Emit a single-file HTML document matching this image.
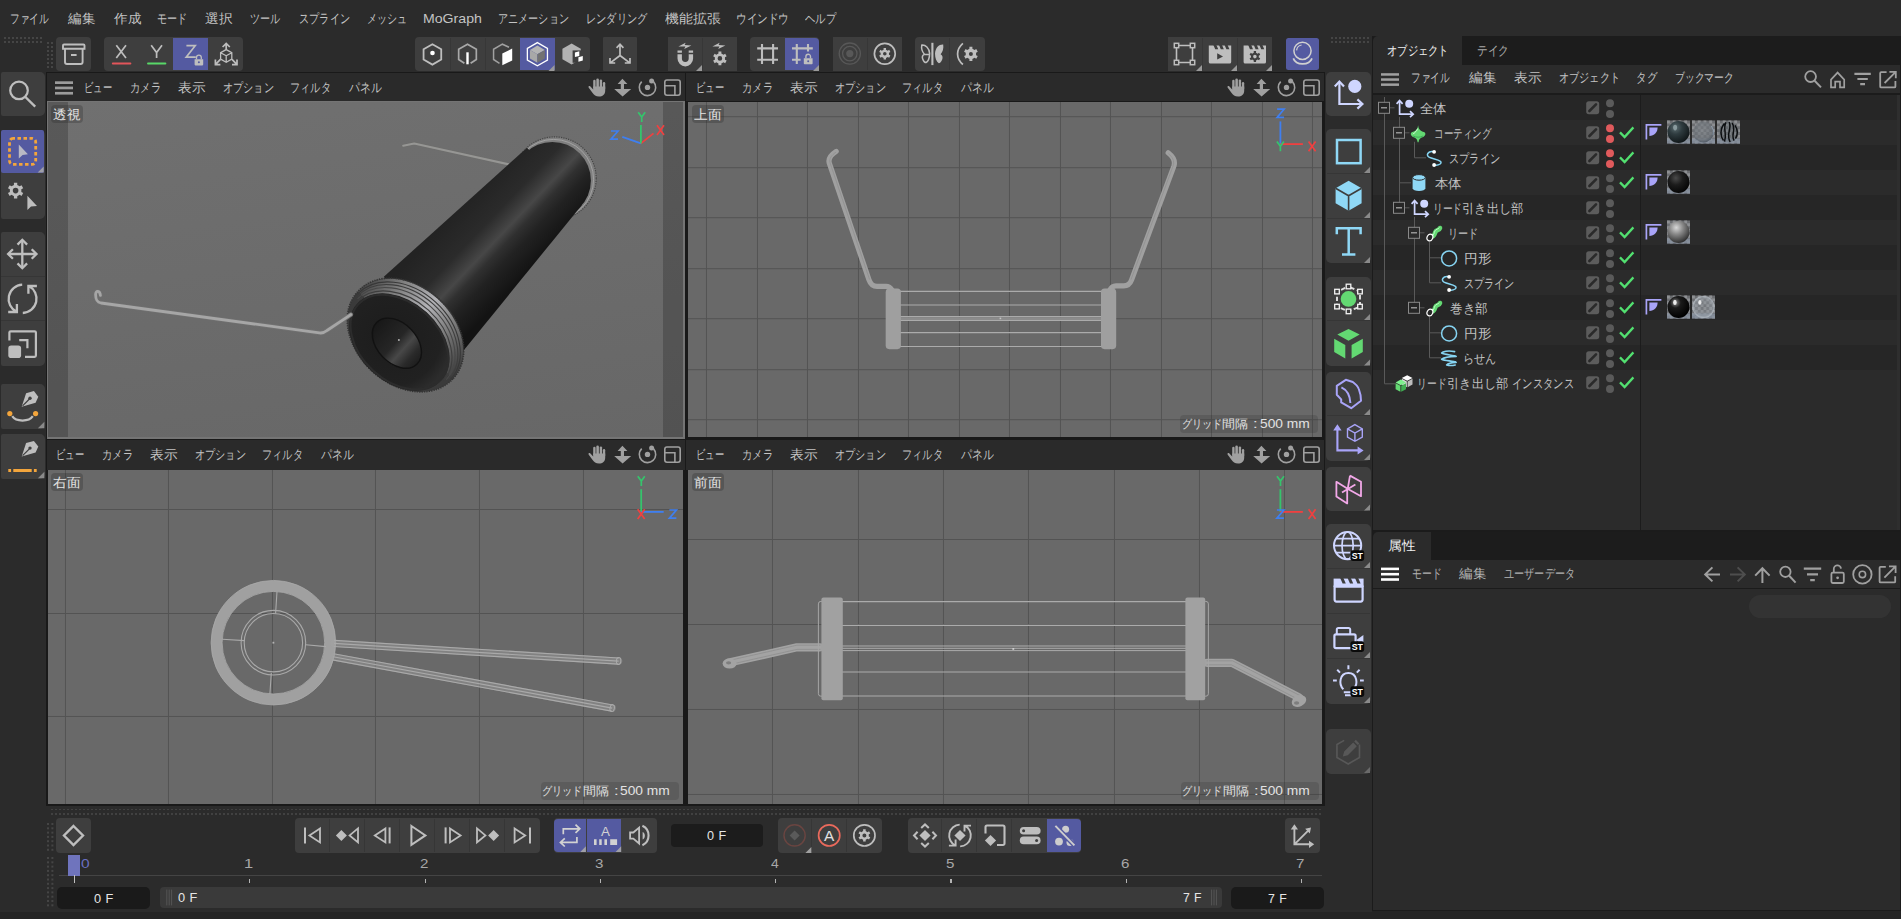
<!DOCTYPE html>
<html lang="ja"><head><meta charset="utf-8"><title>Cinema 4D</title>
<style>
html,body{margin:0;padding:0}
body{width:1901px;height:919px;overflow:hidden;background:#2b2b2b;position:relative;font-family:"Liberation Sans",sans-serif;font-size:13px;color:#c4c4c4}
div,span,svg{position:absolute}
.t{white-space:nowrap;line-height:17px;transform-origin:0 50%}
svg{overflow:visible}
</style></head><body>
<!-- main menu -->
<span class="t" style="left:9.76px;top:10px;transform:scaleX(0.749);">ファイル</span>
<span class="t" style="left:68px;top:10px;transform:scaleX(1.039);">編集</span>
<span class="t" style="left:113.6px;top:10px;transform:scaleX(1.039);">作成</span>
<span class="t" style="left:157.02px;top:10px;transform:scaleX(0.778);">モード</span>
<span class="t" style="left:205.27px;top:10px;transform:scaleX(1.060);">選択</span>
<span class="t" style="left:250.22px;top:10px;transform:scaleX(0.776);">ツール</span>
<span class="t" style="left:298.62px;top:10px;transform:scaleX(0.783);">スプライン</span>
<span class="t" style="left:367.34px;top:10px;transform:scaleX(0.771);">メッシュ</span>
<span class="t" style="left:423.31px;top:10px;transform:scaleX(1.086);">MoGraph</span>
<span class="t" style="left:498.03px;top:10px;transform:scaleX(0.777);">アニメーション</span>
<span class="t" style="left:585.62px;top:10px;transform:scaleX(0.788);">レンダリング</span>
<span class="t" style="left:665.3px;top:10px;transform:scaleX(1.068);">機能拡張</span>
<span class="t" style="left:735.78px;top:10px;transform:scaleX(0.815);">ウインドウ</span>
<span class="t" style="left:805.4px;top:10px;transform:scaleX(0.800);">ヘルプ</span>
<!-- toolbar -->
<svg style="left:4px;top:37px;" width="40" height="6" viewBox="4 37 40 6"><g fill="#454545"><rect x="4" y="37" width="2" height="2"/><rect x="4" y="41" width="2" height="2"/><rect x="8" y="37" width="2" height="2"/><rect x="8" y="41" width="2" height="2"/><rect x="12" y="37" width="2" height="2"/><rect x="12" y="41" width="2" height="2"/><rect x="16" y="37" width="2" height="2"/><rect x="16" y="41" width="2" height="2"/><rect x="20" y="37" width="2" height="2"/><rect x="20" y="41" width="2" height="2"/><rect x="24" y="37" width="2" height="2"/><rect x="24" y="41" width="2" height="2"/><rect x="28" y="37" width="2" height="2"/><rect x="28" y="41" width="2" height="2"/><rect x="32" y="37" width="2" height="2"/><rect x="32" y="41" width="2" height="2"/><rect x="36" y="37" width="2" height="2"/><rect x="36" y="41" width="2" height="2"/><rect x="40" y="37" width="2" height="2"/><rect x="40" y="41" width="2" height="2"/></g></svg>
<svg style="left:47px;top:42px;" width="6" height="26" viewBox="47 42 6 26"><g fill="#454545"><rect x="47" y="42" width="2" height="2"/><rect x="47" y="46" width="2" height="2"/><rect x="47" y="50" width="2" height="2"/><rect x="47" y="54" width="2" height="2"/><rect x="47" y="58" width="2" height="2"/><rect x="47" y="62" width="2" height="2"/><rect x="47" y="66" width="2" height="2"/><rect x="51" y="42" width="2" height="2"/><rect x="51" y="46" width="2" height="2"/><rect x="51" y="50" width="2" height="2"/><rect x="51" y="54" width="2" height="2"/><rect x="51" y="58" width="2" height="2"/><rect x="51" y="62" width="2" height="2"/><rect x="51" y="66" width="2" height="2"/></g></svg>
<svg style="left:1331px;top:37px;" width="40" height="6" viewBox="1331 37 40 6"><g fill="#454545"><rect x="1331" y="37" width="2" height="2"/><rect x="1331" y="41" width="2" height="2"/><rect x="1335" y="37" width="2" height="2"/><rect x="1335" y="41" width="2" height="2"/><rect x="1339" y="37" width="2" height="2"/><rect x="1339" y="41" width="2" height="2"/><rect x="1343" y="37" width="2" height="2"/><rect x="1343" y="41" width="2" height="2"/><rect x="1347" y="37" width="2" height="2"/><rect x="1347" y="41" width="2" height="2"/><rect x="1351" y="37" width="2" height="2"/><rect x="1351" y="41" width="2" height="2"/><rect x="1355" y="37" width="2" height="2"/><rect x="1355" y="41" width="2" height="2"/><rect x="1359" y="37" width="2" height="2"/><rect x="1359" y="41" width="2" height="2"/><rect x="1363" y="37" width="2" height="2"/><rect x="1363" y="41" width="2" height="2"/><rect x="1367" y="37" width="2" height="2"/><rect x="1367" y="41" width="2" height="2"/></g></svg>
<div style="left:56px;top:37px;width:35px;height:34px;background:#3e3e3e;border-radius:4px;"></div>
<svg style="left:56px;top:37px;" width="35" height="34" viewBox="56 37 35 34"><path d="M64 44.5h19.5a1 1 0 0 1 1 1v3.3h-21.5v-3.3a1 1 0 0 1 1-1z M65 48.8v13.2a2 2 0 0 0 2 2h13.6a2 2 0 0 0 2-2v-13.2 M71 55h5.6" stroke="#bebebe" stroke-width="1.9" fill="none" /></svg>
<div style="left:104px;top:37px;width:139px;height:34px;background:#3e3e3e;border-radius:4px;"></div>
<div style="left:173px;top:37.8px;width:35px;height:32.6px;background:#545aa1;border-radius:0px 0px 0px 0px;"></div>
<svg style="left:104px;top:37px;" width="139" height="34" viewBox="104 37 139 34"><path d="M116.3 45.2L126 58 M126 45.2L116.3 58" stroke="#bebebe" stroke-width="1.7" fill="none" /><path d="M112.8 63.5H130.4" stroke="#e2555a" stroke-width="1.9" fill="none" stroke-linecap="round"/><path d="M151.2 45.2L156.6 52.6L162 45.2 M156.6 52.6V58" stroke="#bebebe" stroke-width="1.7" fill="none" /><path d="M148 63.5H165.4" stroke="#58d868" stroke-width="1.9" fill="none" stroke-linecap="round"/><path d="M186.4 45.7H195.2L186.2 57.1H195.8" stroke="#bebebe" stroke-width="1.7" fill="none" /><path d="M194.6 59.2h8.6v5.4a.8 .8 0 0 1 -.8 .8h-7a.8 .8 0 0 1 -.8 -.8z" fill="#bebebe" /><path d="M196.5 59.2v-1.6a2.4 2.4 0 0 1 4.8 0v1.6" stroke="#bebebe" stroke-width="1.3" fill="none" /><circle cx="198.9" cy="62.2" r="1" fill="#545aa1"/><path d="M226.2 49.6l5.6 3.1v6.4l-5.6 3.1l-5.6 -3.1v-6.4z M226.2 55.8v6.4 M226.2 55.8l-5.6 -3.1 M226.2 55.8l5.6 -3.1" stroke="#bebebe" stroke-width="1.3" fill="none" /><path d="M226.2 49.4V43.8 M222.6 47L226.2 43.4L229.79999999999998 47" stroke="#bebebe" stroke-width="1.7" fill="none" /><path d="M220.39999999999998 59.4L215.8 64.2 M215.4 59.6V64.6H220.4" stroke="#bebebe" stroke-width="1.7" fill="none" /><path d="M232.0 59.4L236.6 64.2 M237 59.6V64.6H232" stroke="#bebebe" stroke-width="1.7" fill="none" /></svg>
<div style="left:415px;top:37px;width:174.5px;height:34px;background:#3e3e3e;border-radius:4px;"></div>
<div style="left:449.5px;top:38px;width:1px;height:32px;background:#373737;"></div>
<div style="left:484.5px;top:38px;width:1px;height:32px;background:#373737;"></div>
<div style="left:520px;top:37.8px;width:34.5px;height:32.6px;background:#545aa1;border-radius:0px 0px 0px 0px;"></div>
<svg style="left:415px;top:37px;" width="175" height="34" viewBox="415 37 175 34"><path d="M432.4 44.2L441.23 49.3L441.23 59.5L432.4 64.6L423.57 59.5L423.57 49.3Z" stroke="#bebebe" stroke-width="1.8" fill="none" /><circle cx="432.5" cy="53" r="2.3" fill="#fff"/><path d="M464.4 63.3L458.67 59.5L458.67 49.3L467.5 44.2L476.33 49.3L476.33 59.5L470.6 63.3" stroke="#a8a8a8" stroke-width="1.7" fill="none" /><path d="M467.5 52.3V64.3" stroke="#fff" stroke-width="2.4" fill="none" /><path d="M499.5 63.3L493.57 59.5L493.57 49.3L502.4 44.2L509 47.3" stroke="#a0a0a0" stroke-width="1.5" fill="none" /><path d="M502.3 53.6L512.2 48.6V60.4L502.3 65.2Z" fill="#fff" /><path d="M537.4 42.6L547.45 48.4L547.45 60L537.4 65.8L527.35 60L527.35 48.4Z" stroke="#fff" stroke-width="1.3" fill="none" /><path d="M537.4 45.6L544.85 49.9L537.4 54.2L529.95 49.9Z" fill="#b4b4b4" /><path d="M529.95 49.9L537.4 54.2L537.4 62.8L529.95 58.5Z" fill="#a8a8a8" /><path d="M544.85 49.9L537.4 54.2L537.4 62.8L544.85 58.5Z" fill="#727272" /><path d="M554.5 65V71H548.5Z" fill="#9a9a9a"/><path d="M571.6 43.4L580.78 48.7L580.78 59.3L571.6 64.6L562.42 59.3L562.42 48.7Z" fill="#b2b2b2" /><path d="M572.6 50.4H585V62.8H572.6Z" fill="#3e3e3e" /><path d="M574.9 52.5l4.4 -1.2v4.6l-4.4 1.2z M578.4 57.2l4.4 -1.2v4.6l-4.4 1.2z" fill="#fff" /></svg>
<div style="left:603px;top:37px;width:34px;height:34px;background:#3e3e3e;border-radius:1px;"></div>
<svg style="left:603px;top:37px;" width="34" height="34" viewBox="603 37 34 34"><path d="M620 55.5V44.5 M616.6 47.8L620 44.2L623.4 47.8 M620 55.5L610.6 62.6 M610 58V63H615.2 M620 55.5L629.4 62.6 M630 58V63H624.8" stroke="#bebebe" stroke-width="1.7" fill="none" /></svg>
<div style="left:668px;top:37px;width:69px;height:34px;background:#3e3e3e;border-radius:0px;"></div>
<div style="left:701.5px;top:38px;width:1px;height:32px;background:#373737;"></div>
<svg style="left:668px;top:37px;" width="69" height="34" viewBox="668 37 69 34"><path d="M679.7 50.6V58.6A5.6 5.6 0 0 0 690.9 58.6V50.6" stroke="#bebebe" stroke-width="4.4" fill="none" /><path d="M677 53.5H682.4 M688.2 53.5H693.6" stroke="#3e3e3e" stroke-width="1.3" fill="none" /><path d="M678.4 46.6L685.6 42.7L684.6 45L691.4 45.4L684.2 49L685.4 46.6Z" fill="#bebebe" /><path d="M702 65V71H696Z" fill="#9a9a9a"/><path d="M721.38 65.34 L718.42 65.34 L718.45 63.39 L716.3 62.15 L714.62 63.15 L713.15 60.59 L714.85 59.64 L714.85 57.16 L713.15 56.21 L714.62 53.65 L716.3 54.65 L718.45 53.41 L718.42 51.46 L721.38 51.46 L721.35 53.41 L723.5 54.65 L725.18 53.65 L726.65 56.21 L724.95 57.16 L724.95 59.64 L726.65 60.59 L725.18 63.15 L723.5 62.15 L721.35 63.39Z M722.2 58.4 A2.3 2.3 0 1 0 717.6 58.4 A2.3 2.3 0 1 0 722.2 58.4Z" fill="#bebebe" fill-rule="evenodd"/><path d="M712.4 46.6L719.6 42.7L718.6 45L725.4 45.4L718.2 49L719.4 46.6Z" fill="#bebebe" /></svg>
<div style="left:750px;top:37px;width:69px;height:34px;background:#3e3e3e;border-radius:4px;"></div>
<div style="left:785px;top:37.8px;width:34px;height:32.6px;background:#545aa1;border-radius:0px 4px 4px 0px;"></div>
<svg style="left:750px;top:37px;" width="69" height="34" viewBox="750 37 69 34"><path d="M762 44V64 M773.1 44V64 M757.2 48.4H778 M757.2 59.8H778" stroke="#bebebe" stroke-width="2.1" fill="none" /><path d="M796.8 44V64 M808 44V51.6 M792 48.4H812.8 M792 59.8H800.6" stroke="#bebebe" stroke-width="2.1" fill="none" /><path d="M803.8 58.2h8.8v5.2a.8 .8 0 0 1 -.8 .8h-7.2a.8 .8 0 0 1 -.8 -.8z" fill="#bebebe" /><path d="M805.9 58.2v-1.7a2.3 2.3 0 0 1 4.6 0v1.7" stroke="#bebebe" stroke-width="1.4" fill="none" /><circle cx="808.2" cy="61.2" r="1" fill="#545aa1"/><path d="M819 65V71H813Z" fill="#9a9a9a"/></svg>
<div style="left:833px;top:37px;width:69px;height:34px;background:#3e3e3e;border-radius:0px;"></div>
<div style="left:866.5px;top:38px;width:1px;height:32px;background:#373737;"></div>
<svg style="left:833px;top:37px;" width="69" height="34" viewBox="833 37 69 34"><g fill="none" stroke="#585858" stroke-width="1.3"><circle cx="849.8" cy="53.6" r="10.6"/><circle cx="849.8" cy="53.6" r="7.2"/></g><circle cx="849.8" cy="53.6" r="3.6" fill="#585858"/><circle cx="884.8" cy="53.8" r="10.4" fill="none" stroke="#bebebe" stroke-width="1.7"/><path d="M886.03 59.57 L883.57 59.57 L883.6 57.93 L881.82 56.9 L880.42 57.75 L879.19 55.62 L880.62 54.83 L880.62 52.77 L879.19 51.98 L880.42 49.85 L881.82 50.7 L883.6 49.67 L883.57 48.03 L886.03 48.03 L886 49.67 L887.78 50.7 L889.18 49.85 L890.41 51.98 L888.98 52.77 L888.98 54.83 L890.41 55.62 L889.18 57.75 L887.78 56.9 L886 57.93Z M886.6 53.8 A1.8 1.8 0 1 0 883 53.8 A1.8 1.8 0 1 0 886.6 53.8Z" fill="#bebebe" fill-rule="evenodd"/></svg>
<div style="left:915px;top:37px;width:69.5px;height:34px;background:#3e3e3e;border-radius:4px;"></div>
<div style="left:949px;top:38px;width:1px;height:32px;background:#373737;"></div>
<svg style="left:915px;top:37px;" width="70" height="34" viewBox="915 37 70 34"><path d="M932.4 42.8V65.1" stroke="#bebebe" stroke-width="2.1" fill="none" /><path d="M935 53.4C935.4 47.6 939.4 44.2 943.2 44.6C943.8 48.4 942.8 52 940.6 54.2C942.6 55.4 943 57.6 942.2 59.4C941.4 61.6 940 63.2 938.8 63.2C936.4 61.6 935 58 935 53.4Z" fill="#bebebe" /><path d="M929.6 53.4C929.2 47.8 925.4 44.6 921.8 45C921.2 48.4 922.2 51.8 924.4 54.2C922.4 55.4 922 57.4 922.8 59.2C923.6 61.2 924.8 62.6 926 62.6C928.2 61.2 929.6 57.8 929.6 53.4Z M924.4 54.2L929.6 54.4" stroke="#bebebe" stroke-width="1.5" fill="none" stroke-linejoin="round"/><path d="M962.9 43.4C955.8 49.6 955.8 58.4 962.9 64.5" stroke="#bebebe" stroke-width="1.7" fill="none" /><path d="M972.4 60.94 L969.4 60.94 L969.42 58.99 L967.23 57.73 L965.55 58.72 L964.05 56.12 L965.75 55.16 L965.75 52.64 L964.05 51.68 L965.55 49.08 L967.23 50.07 L969.42 48.81 L969.4 46.86 L972.4 46.86 L972.38 48.81 L974.57 50.07 L976.25 49.08 L977.75 51.68 L976.05 52.64 L976.05 55.16 L977.75 56.12 L976.25 58.72 L974.57 57.73 L972.38 58.99Z M972.9 53.9 A2 2 0 1 0 968.9 53.9 A2 2 0 1 0 972.9 53.9Z" fill="#bebebe" fill-rule="evenodd"/></svg>
<div style="left:1168px;top:37px;width:104px;height:34px;background:#3e3e3e;border-radius:0px;"></div>
<div style="left:1201.5px;top:38px;width:1px;height:32px;background:#373737;"></div>
<div style="left:1236.5px;top:38px;width:1px;height:32px;background:#373737;"></div>
<svg style="left:1168px;top:37px;" width="104" height="34" viewBox="1168 37 104 34"><path d="M1176.5 45.5H1192.5V62.5H1176.5Z" stroke="#bebebe" stroke-width="1.6" fill="none" /><rect x="1174.3" y="43.3" width="4.4" height="4.4" fill="#3e3e3e" stroke="#bebebe" stroke-width="1.5"/><rect x="1190.3" y="43.3" width="4.4" height="4.4" fill="#3e3e3e" stroke="#bebebe" stroke-width="1.5"/><rect x="1174.3" y="60.3" width="4.4" height="4.4" fill="#3e3e3e" stroke="#bebebe" stroke-width="1.5"/><rect x="1190.3" y="60.3" width="4.4" height="4.4" fill="#3e3e3e" stroke="#bebebe" stroke-width="1.5"/><path d="M1202 65V71H1196Z" fill="#9a9a9a"/><path d="M1208.8 45.4h22.4v16.6a1.6 1.6 0 0 1 -1.6 1.6h-19.2a1.6 1.6 0 0 1 -1.6 -1.6z" fill="#bebebe" /><path d="M1213.3999999999999 45h3l1.8 4.2h-3z" fill="#3e3e3e" /><path d="M1218.9999999999998 45h3l1.8 4.2h-3z" fill="#3e3e3e" /><path d="M1224.6 45h3l1.8 4.2h-3z" fill="#3e3e3e" /><path d="M1217.2 53.2v6.4l5.8-3.2z" fill="#3e3e3e" /><path d="M1237 65V71H1231Z" fill="#9a9a9a"/><path d="M1243.6 45.4h22.4v16.6a1.6 1.6 0 0 1 -1.6 1.6h-19.2a1.6 1.6 0 0 1 -1.6 -1.6z" fill="#bebebe" /><path d="M1248.1999999999998 45h3l1.8 4.2h-3z" fill="#3e3e3e" /><path d="M1253.7999999999997 45h3l1.8 4.2h-3z" fill="#3e3e3e" /><path d="M1259.3999999999999 45h3l1.8 4.2h-3z" fill="#3e3e3e" /><path d="M1256.06 62.08 L1253.74 62.08 L1253.78 60.44 L1252.13 59.49 L1250.74 60.35 L1249.57 58.33 L1251.02 57.55 L1251.02 55.65 L1249.57 54.87 L1250.74 52.85 L1252.13 53.71 L1253.78 52.76 L1253.74 51.12 L1256.06 51.12 L1256.02 52.76 L1257.67 53.71 L1259.06 52.85 L1260.23 54.87 L1258.78 55.65 L1258.78 57.55 L1260.23 58.33 L1259.06 60.35 L1257.67 59.49 L1256.02 60.44Z M1256.7 56.6 A1.8 1.8 0 1 0 1253.1 56.6 A1.8 1.8 0 1 0 1256.7 56.6Z" fill="#3e3e3e" fill-rule="evenodd"/><path d="M1272 65V71H1266Z" fill="#9a9a9a"/></svg>
<div style="left:1286.2px;top:37.8px;width:32.8px;height:32.6px;background:#545aa1;border-radius:2.5px;"></div>
<svg style="left:1286px;top:37px;" width="33" height="34" viewBox="1286 37 33 34"><circle cx="1302.5" cy="50.8" r="8.6" fill="none" stroke="#d0d0d0" stroke-width="1.5"/><path d="M1296.6 50.4A6 6 0 0 1 1301.6 45" stroke="#d0d0d0" stroke-width="1.2" fill="none" /><path d="M1293.3 58.4C1296 65.8 1309.2 65.8 1312 58.4" stroke="#d0d0d0" stroke-width="1.7" fill="none" /></svg>
<!-- left tool palette -->
<div style="left:0.8px;top:72px;width:44.7px;height:44px;background:#3e3e3e;border-radius:2px 5px 5px 2px;"></div>
<div style="left:0.8px;top:129.5px;width:44.7px;height:89px;background:#3e3e3e;border-radius:2px 5px 5px 2px;"></div>
<div style="left:1px;top:130px;width:42.9px;height:42.8px;background:#545aa1;border-radius:2px;"></div>
<div style="left:0.8px;top:232px;width:44.7px;height:134px;background:#3e3e3e;border-radius:2px 5px 5px 2px;"></div>
<div style="left:1px;top:275.5px;width:43.5px;height:1px;background:#363636;"></div>
<div style="left:1px;top:320px;width:43.5px;height:1px;background:#363636;"></div>
<div style="left:0.8px;top:384px;width:44.7px;height:44.5px;background:#3e3e3e;border-radius:2px 5px 5px 2px;"></div>
<div style="left:0.8px;top:434px;width:44.7px;height:45px;background:#3e3e3e;border-radius:2px 5px 5px 2px;"></div>
<svg style="left:0px;top:72px;" width="46" height="410" viewBox="0 72 46 410"><circle cx="19" cy="90.4" r="8.8" fill="none" stroke="#bebebe" stroke-width="2.2"/><path d="M25.4 97L35.2 106.6" stroke="#bebebe" stroke-width="2.4" fill="none" /><rect x="9.5" y="138.4" width="26.2" height="26" rx="3.6" fill="none" stroke="#f3a53c" stroke-width="2.8" stroke-dasharray="3.5 2.5" stroke-dashoffset="1.6"/><path d="M18.8 144.4V158.6L22.6 155L27.9 154.3Z" fill="#b9b9c4" /><path d="M43.7 166.6V172.6H37.7Z" fill="#a0a0a8"/><path d="M17.26 198.43 L13.94 198.43 L13.95 196.27 L11.52 194.86 L9.65 195.95 L7.99 193.07 L9.87 192.01 L9.87 189.19 L7.99 188.13 L9.65 185.25 L11.52 186.34 L13.95 184.93 L13.94 182.77 L17.26 182.77 L17.25 184.93 L19.68 186.34 L21.55 185.25 L23.21 188.13 L21.33 189.19 L21.33 192.01 L23.21 193.07 L21.55 195.95 L19.68 194.86 L17.25 196.27Z M18.4 190.6 A2.8 2.8 0 1 0 12.8 190.6 A2.8 2.8 0 1 0 18.4 190.6Z" fill="#bebebe" fill-rule="evenodd"/><path d="M27.4 195.8V210L31 206.4L37 206Z" fill="#bebebe" /><path d="M22.3 240.4V267.6 M8.700000000000001 254H35.9" stroke="#bebebe" stroke-width="2.3" fill="none" /><path d="M17.5 244.6L22.3 239.8L27.1 244.6 M17.5 263.4L22.3 268.2L27.1 263.4 M12.9 249.2L8.100000000000001 254L12.9 258.8 M31.700000000000003 249.2L36.5 254L31.700000000000003 258.8" stroke="#bebebe" stroke-width="2.3" fill="none" /><path d="M22.2 284.7A14.3 14.3 0 0 0 16.6 311.8 M8.2 312H16.9V303.9" stroke="#bebebe" stroke-width="2.3" fill="none" /><path d="M22.8 313A14.3 14.3 0 0 0 28.8 286 M36.9 286H28.4V293.8" stroke="#bebebe" stroke-width="2.3" fill="none" /><path d="M15 331.2H35.8V356.8H24 M9.2 339V331.2" stroke="#bebebe" stroke-width="0" fill="none" /><path d="M9.4 340.6V332.6A1.3 1.3 0 0 1 10.7 331.3H34.6A1.3 1.3 0 0 1 35.9 332.6V355.6A1.3 1.3 0 0 1 34.6 356.9H25" stroke="#bebebe" stroke-width="2.2" fill="none" /><path d="M19.2 340.2H27.4V348.2" stroke="#bebebe" stroke-width="2.2" fill="none" /><rect x="8.3" y="345.6" width="12.8" height="12.4" rx="2.8" fill="#bebebe"/><path d="M21.7 406.7L26.1 393.3L33.9 391.1L38.3 396.7L35.6 402.8Z" fill="#bebebe" /><path d="M22.6 405.8L29.4 399" stroke="#3e3e3e" stroke-width="1.2" fill="none" /><circle cx="30" cy="398.3" r="1.7" fill="#3e3e3e"/><path d="M12.2 416.2C16 422 29 422 32.8 416.2" stroke="#bebebe" stroke-width="2.2" fill="none" /><circle cx="9.8" cy="413.6" r="2.6" fill="#f3a53c"/><circle cx="35.6" cy="413.6" r="2.6" fill="#f3a53c"/><path d="M44.4 421.7V428.2H37.9Z" fill="#8a8a8a"/><path d="M21.7 456.5L26.1 443.1L33.9 440.90000000000003L38.3 446.5L35.6 452.6Z" fill="#bebebe" /><path d="M22.6 455.6L29.4 448.8" stroke="#3e3e3e" stroke-width="1.2" fill="none" /><circle cx="30" cy="448.1" r="1.7" fill="#3e3e3e"/><path d="M8.3 470.6H11.1 M13.3 470.6H31.7 M33.9 470.6H36.7" stroke="#f3a53c" stroke-width="3" fill="none" /><path d="M44.4 471.7V478.2H37.9Z" fill="#8a8a8a"/></svg>
<!-- viewports -->
<div style="left:46px;top:71.6px;width:1279px;height:734.6px;background:#191919;"></div>
<div style="left:47px;top:73.2px;width:638.2px;height:27.8px;background:#2a2a2a;"></div>
<svg style="left:55px;top:81.2px;" width="18" height="14" viewBox="55 81.2 18 14"><rect x="55" y="81.5" width="18" height="2.7" fill="#9c9c9c"/><rect x="55" y="86.8" width="18" height="2.7" fill="#9c9c9c"/><rect x="55" y="92.1" width="18" height="2.7" fill="#9c9c9c"/></svg>
<span class="t" style="left:84.2px;top:79.2px;transform:scaleX(0.718);">ビュー</span>
<span class="t" style="left:129.7px;top:79.2px;transform:scaleX(0.797);">カメラ</span>
<span class="t" style="left:177.74px;top:79.2px;transform:scaleX(1.050);">表示</span>
<span class="t" style="left:222.71px;top:79.2px;transform:scaleX(0.781);">オプション</span>
<span class="t" style="left:289.72px;top:79.2px;transform:scaleX(0.784);">フィルタ</span>
<span class="t" style="left:348.5px;top:79.2px;transform:scaleX(0.841);">パネル</span>
<svg style="left:585.2px;top:73.2px;" width="100" height="27.8" viewBox="585.2 73.2 100 27.8"><g transform="translate(-638.8 0.2)"><g fill="#a0a0a0"><rect x="1232.2" y="79.8" width="2.4" height="9" rx="1.2"/><rect x="1235.3" y="78.4" width="2.6" height="10" rx="1.3"/><rect x="1238.7" y="79.4" width="2.4" height="9" rx="1.2"/><rect x="1241.9" y="82" width="2.3" height="8" rx="1.15"/><path d="M1232.2 86.4H1244.2V90.4C1244.2 94.4 1241.6 96.5 1238 96.5C1234.8 96.5 1233 95.2 1231.4 92.8L1227.6 87.4C1227 86.2 1228.4 85.4 1229.4 86.4L1232.2 89.6Z"/></g><path d="M1261.4 78.8L1266.4 83.9H1263V88.9H1270.2L1261.6 96.5L1253.2 88.9H1259.8V83.9H1256.6Z" fill="#a0a0a0" /><path d="M1280.7 81.6A8.2 8.2 0 1 0 1292.6 81.9" fill="none" stroke="#a0a0a0" stroke-width="1.6"/><circle cx="1286.5" cy="87.4" r="2.7" fill="#a0a0a0"/><circle cx="1290.6" cy="81.1" r="2.5" fill="#a0a0a0"/><rect x="1303.8" y="80" width="15.4" height="15.2" rx="2.2" fill="none" stroke="#a0a0a0" stroke-width="1.6"/><path d="M1303.8 85.8H1313.9V95.2" stroke="#a0a0a0" stroke-width="1.6" fill="none" /></g></svg>
<div style="left:686.2px;top:73.2px;width:637.8px;height:27.8px;background:#2a2a2a;"></div>
<span class="t" style="left:696.2px;top:79.2px;transform:scaleX(0.718);">ビュー</span>
<span class="t" style="left:741.7px;top:79.2px;transform:scaleX(0.797);">カメラ</span>
<span class="t" style="left:789.74px;top:79.2px;transform:scaleX(1.050);">表示</span>
<span class="t" style="left:834.71px;top:79.2px;transform:scaleX(0.781);">オプション</span>
<span class="t" style="left:901.72px;top:79.2px;transform:scaleX(0.784);">フィルタ</span>
<span class="t" style="left:960.5px;top:79.2px;transform:scaleX(0.841);">パネル</span>
<svg style="left:1224px;top:73.2px;" width="100" height="27.8" viewBox="1224 73.2 100 27.8"><g transform="translate(0 0.2)"><g fill="#a0a0a0"><rect x="1232.2" y="79.8" width="2.4" height="9" rx="1.2"/><rect x="1235.3" y="78.4" width="2.6" height="10" rx="1.3"/><rect x="1238.7" y="79.4" width="2.4" height="9" rx="1.2"/><rect x="1241.9" y="82" width="2.3" height="8" rx="1.15"/><path d="M1232.2 86.4H1244.2V90.4C1244.2 94.4 1241.6 96.5 1238 96.5C1234.8 96.5 1233 95.2 1231.4 92.8L1227.6 87.4C1227 86.2 1228.4 85.4 1229.4 86.4L1232.2 89.6Z"/></g><path d="M1261.4 78.8L1266.4 83.9H1263V88.9H1270.2L1261.6 96.5L1253.2 88.9H1259.8V83.9H1256.6Z" fill="#a0a0a0" /><path d="M1280.7 81.6A8.2 8.2 0 1 0 1292.6 81.9" fill="none" stroke="#a0a0a0" stroke-width="1.6"/><circle cx="1286.5" cy="87.4" r="2.7" fill="#a0a0a0"/><circle cx="1290.6" cy="81.1" r="2.5" fill="#a0a0a0"/><rect x="1303.8" y="80" width="15.4" height="15.2" rx="2.2" fill="none" stroke="#a0a0a0" stroke-width="1.6"/><path d="M1303.8 85.8H1313.9V95.2" stroke="#a0a0a0" stroke-width="1.6" fill="none" /></g></svg>
<div style="left:47px;top:440px;width:638.2px;height:29.8px;background:#2a2a2a;"></div>
<span class="t" style="left:56.2px;top:446.4px;transform:scaleX(0.718);">ビュー</span>
<span class="t" style="left:101.7px;top:446.4px;transform:scaleX(0.797);">カメラ</span>
<span class="t" style="left:149.74px;top:446.4px;transform:scaleX(1.050);">表示</span>
<span class="t" style="left:194.71px;top:446.4px;transform:scaleX(0.781);">オプション</span>
<span class="t" style="left:261.72px;top:446.4px;transform:scaleX(0.784);">フィルタ</span>
<span class="t" style="left:320.5px;top:446.4px;transform:scaleX(0.841);">パネル</span>
<svg style="left:585.2px;top:440px;" width="100" height="29.8" viewBox="585.2 440 100 29.8"><g transform="translate(-638.8 367)"><g fill="#a0a0a0"><rect x="1232.2" y="79.8" width="2.4" height="9" rx="1.2"/><rect x="1235.3" y="78.4" width="2.6" height="10" rx="1.3"/><rect x="1238.7" y="79.4" width="2.4" height="9" rx="1.2"/><rect x="1241.9" y="82" width="2.3" height="8" rx="1.15"/><path d="M1232.2 86.4H1244.2V90.4C1244.2 94.4 1241.6 96.5 1238 96.5C1234.8 96.5 1233 95.2 1231.4 92.8L1227.6 87.4C1227 86.2 1228.4 85.4 1229.4 86.4L1232.2 89.6Z"/></g><path d="M1261.4 78.8L1266.4 83.9H1263V88.9H1270.2L1261.6 96.5L1253.2 88.9H1259.8V83.9H1256.6Z" fill="#a0a0a0" /><path d="M1280.7 81.6A8.2 8.2 0 1 0 1292.6 81.9" fill="none" stroke="#a0a0a0" stroke-width="1.6"/><circle cx="1286.5" cy="87.4" r="2.7" fill="#a0a0a0"/><circle cx="1290.6" cy="81.1" r="2.5" fill="#a0a0a0"/><rect x="1303.8" y="80" width="15.4" height="15.2" rx="2.2" fill="none" stroke="#a0a0a0" stroke-width="1.6"/><path d="M1303.8 85.8H1313.9V95.2" stroke="#a0a0a0" stroke-width="1.6" fill="none" /></g></svg>
<div style="left:686.2px;top:440px;width:637.8px;height:29.8px;background:#2a2a2a;"></div>
<span class="t" style="left:696.2px;top:446.4px;transform:scaleX(0.718);">ビュー</span>
<span class="t" style="left:741.7px;top:446.4px;transform:scaleX(0.797);">カメラ</span>
<span class="t" style="left:789.74px;top:446.4px;transform:scaleX(1.050);">表示</span>
<span class="t" style="left:834.71px;top:446.4px;transform:scaleX(0.781);">オプション</span>
<span class="t" style="left:901.72px;top:446.4px;transform:scaleX(0.784);">フィルタ</span>
<span class="t" style="left:960.5px;top:446.4px;transform:scaleX(0.841);">パネル</span>
<svg style="left:1224px;top:440px;" width="100" height="29.8" viewBox="1224 440 100 29.8"><g transform="translate(0 367)"><g fill="#a0a0a0"><rect x="1232.2" y="79.8" width="2.4" height="9" rx="1.2"/><rect x="1235.3" y="78.4" width="2.6" height="10" rx="1.3"/><rect x="1238.7" y="79.4" width="2.4" height="9" rx="1.2"/><rect x="1241.9" y="82" width="2.3" height="8" rx="1.15"/><path d="M1232.2 86.4H1244.2V90.4C1244.2 94.4 1241.6 96.5 1238 96.5C1234.8 96.5 1233 95.2 1231.4 92.8L1227.6 87.4C1227 86.2 1228.4 85.4 1229.4 86.4L1232.2 89.6Z"/></g><path d="M1261.4 78.8L1266.4 83.9H1263V88.9H1270.2L1261.6 96.5L1253.2 88.9H1259.8V83.9H1256.6Z" fill="#a0a0a0" /><path d="M1280.7 81.6A8.2 8.2 0 1 0 1292.6 81.9" fill="none" stroke="#a0a0a0" stroke-width="1.6"/><circle cx="1286.5" cy="87.4" r="2.7" fill="#a0a0a0"/><circle cx="1290.6" cy="81.1" r="2.5" fill="#a0a0a0"/><rect x="1303.8" y="80" width="15.4" height="15.2" rx="2.2" fill="none" stroke="#a0a0a0" stroke-width="1.6"/><path d="M1303.8 85.8H1313.9V95.2" stroke="#a0a0a0" stroke-width="1.6" fill="none" /></g></svg>
<div style="left:47px;top:101px;width:638px;height:337.8px;background:#747474;"></div>
<div style="left:48.2px;top:102px;width:634.8px;height:334.8px;background:linear-gradient(172deg,#707070 0%,#6c6c6c 45%,#676767 100%);"></div>
<div style="left:48.2px;top:102px;width:19.9px;height:334.8px;background:rgba(0,0,0,.2);"></div>
<div style="left:663px;top:102px;width:20px;height:334.8px;background:rgba(0,0,0,.2);"></div>
<svg style="left:48.2px;top:102px;overflow:hidden" width="634.8" height="334.8" viewBox="48.2 102 634.8 334.8"><defs><linearGradient id="gb" gradientUnits="userSpaceOnUse" x1="460.3" y1="207.9" x2="527.5" y2="272"><stop offset="0" stop-color="#232323"/><stop offset=".32" stop-color="#2b2b2b"/><stop offset=".43" stop-color="#3a3a3a"/><stop offset=".52" stop-color="#474747"/><stop offset=".62" stop-color="#303030"/><stop offset=".75" stop-color="#222"/><stop offset="1" stop-color="#131313"/></linearGradient><linearGradient id="gh" gradientUnits="userSpaceOnUse" x1="375" y1="325" x2="420" y2="365"><stop offset="0" stop-color="#181818"/><stop offset=".45" stop-color="#262626"/><stop offset=".62" stop-color="#484848"/><stop offset=".8" stop-color="#2a2a2a"/><stop offset="1" stop-color="#1a1a1a"/></linearGradient><linearGradient id="gr" gradientUnits="userSpaceOnUse" x1="358.5" y1="291.9" x2="452.9" y2="378.1"><stop offset="0" stop-color="#484848"/><stop offset=".22" stop-color="#828282"/><stop offset=".48" stop-color="#b2b2b6"/><stop offset=".7" stop-color="#808080"/><stop offset="1" stop-color="#3c3c3c"/></linearGradient><radialGradient id="gf" gradientUnits="userSpaceOnUse" cx="392" cy="336" r="62"><stop offset="0" stop-color="#1c1c1c"/><stop offset=".8" stop-color="#212121"/><stop offset="1" stop-color="#2c2c2c"/></radialGradient></defs><path d="M403.4 145.8L414.4 143.4L520 166.8" stroke="#6e6e6c" stroke-width="3.4" fill="none" stroke-linejoin="round" stroke-linecap="round"/><path d="M403.4 145.8L414.4 143.4L520 166.8" stroke="#969694" stroke-width="2" fill="none" stroke-linejoin="round" stroke-linecap="round"/><circle cx="554.9" cy="178.4" r="41.5" fill="#7f7f7f"/><circle cx="554.9" cy="178.4" r="41.5" fill="none" stroke="#454545" stroke-width="1.2" stroke-dasharray="1.2 1.2"/><circle cx="553.8" cy="179.4" r="40" fill="none" stroke="#b0b0b0" stroke-width="1" stroke-opacity=".7"/><circle cx="552.6" cy="180.4" r="38.5" fill="url(#gb)"/><path d="M384 276.8L527.2 147.7L582.3 204.7L455 361.3Z" fill="url(#gb)" /><path d="M453.4 378.56A64.6 48.8 42.4 1 0 358 291.44A64.6 48.8 42.4 1 0 453.4 378.56Z" fill="#3a3a3a" /><path d="M358 291.44A64.6 48.8 42.4 0 1 453.4 378.56Z" fill="url(#gr)" /><path d="M357.61 301.22A58.519999999999996 41.76 42.4 0 1 444.03 380.14" stroke="#3e3e3e" stroke-width="1.1" fill="none" /><path d="M357.7 298.77A60.04 43.519999999999996 42.4 0 1 446.38 379.75" stroke="#484848" stroke-width="1.1" fill="none" /><path d="M357.8 296.33A61.559999999999995 45.28 42.4 0 1 448.72 379.35" stroke="#3e3e3e" stroke-width="1.1" fill="none" /><path d="M357.9 293.89A63.08 47.04 42.4 0 1 451.06 378.95" stroke="#383838" stroke-width="1.1" fill="none" /><path d="M453.4 378.56A64.6 48.8 42.4 1 0 358 291.44A64.6 48.8 42.4 1 0 453.4 378.56Z" stroke="#333" stroke-width="1.6" fill="none" stroke-dasharray="1.2 1.2"/><path d="M441.62 380.61A57 40 42.5 1 0 357.58 303.59A57 40 42.5 1 0 441.62 380.61Z" fill="url(#gf)" /><path d="M440.74 379.8A55.8 38.8 42.5 1 0 358.46 304.4A55.8 38.8 42.5 1 0 440.74 379.8Z" stroke="#2c2c2c" stroke-width="2" fill="none" /><path d="M417.41 364.6A29.5 20.3 46.5 1 0 376.79 321.8A29.5 20.3 46.5 1 0 417.41 364.6Z" fill="url(#gh)" /><path d="M417.06 364.24A29 19.8 46.5 1 0 377.14 322.16A29 19.8 46.5 1 0 417.06 364.24Z" stroke="#111" stroke-width="1.4" fill="none" /><circle cx="399.1" cy="340" r="1" fill="#b0b0b0"/><path d="M100.6 295.4C100.2 290.6 95.8 289.8 95.8 294.6C95.8 300 97.2 302.2 101.2 303L319.6 332.9C323.2 333.4 324.8 332.5 327.2 330.5L351 314.6" stroke="#707070" stroke-width="4.6" fill="none" stroke-linejoin="round" stroke-linecap="round"/><path d="M100.6 295.4C100.2 290.6 95.8 289.8 95.8 294.6C95.8 300 97.2 302.2 101.2 303L319.6 332.9C323.2 333.4 324.8 332.5 327.2 330.5L351 314.6" stroke="#a6a6a6" stroke-width="2.8" fill="none" stroke-linejoin="round" stroke-linecap="round"/><path d="M641.1 143.4L622.5 136.9" stroke="#3f7ff0" stroke-width="1.8" fill="none" /><path d="M641.1 143.4L653.7 133.4" stroke="#f04040" stroke-width="1.8" fill="none" /><path d="M641.1 143.4L641.1 125" stroke="#35c46c" stroke-width="1.8" fill="none" /><path d="M611.2 131H618.2L611.2 139.2H618.2" stroke="#3f7ff0" stroke-width="1.7" fill="none"/><path d="M657.2 125.2L664.2 135M664.2 125.2L657.2 135" stroke="#f04040" stroke-width="1.7" fill="none"/><path d="M638.4 112.2L641.9 117.1L645.4 112.2M641.9 117.1V122" stroke="#35c46c" stroke-width="1.7" fill="none"/></svg>
<div style="left:51.3px;top:104.8px;width:31.5px;height:17.8px;background:rgba(40,40,40,.28);border-radius:4px;"></div>
<span class="t" style="left:53.44px;top:105.5px;color:#e4e4e4;transform:scaleX(1.039);">透視</span>
<div style="left:688px;top:101.8px;width:634.2px;height:335px;background:#696969;"></div>
<svg style="left:688px;top:101.8px;overflow:hidden" width="634.2" height="335" viewBox="688 101.8 634.2 335"><path d="M706.5 101.8V436.8" stroke="#535353" stroke-width="1"/><path d="M757.5 101.8V436.8" stroke="#535353" stroke-width="1"/><path d="M807.5 101.8V436.8" stroke="#535353" stroke-width="1"/><path d="M858.5 101.8V436.8" stroke="#535353" stroke-width="1"/><path d="M908.5 101.8V436.8" stroke="#535353" stroke-width="1"/><path d="M959.5 101.8V436.8" stroke="#535353" stroke-width="1"/><path d="M1009.5 101.8V436.8" stroke="#535353" stroke-width="1"/><path d="M1060.5 101.8V436.8" stroke="#535353" stroke-width="1"/><path d="M1110.5 101.8V436.8" stroke="#535353" stroke-width="1"/><path d="M1161.5 101.8V436.8" stroke="#535353" stroke-width="1"/><path d="M1211.5 101.8V436.8" stroke="#535353" stroke-width="1"/><path d="M1262.5 101.8V436.8" stroke="#535353" stroke-width="1"/><path d="M1312.5 101.8V436.8" stroke="#535353" stroke-width="1"/><path d="M688 116.5H1322.2" stroke="#535353" stroke-width="1"/><path d="M688 167.5H1322.2" stroke="#535353" stroke-width="1"/><path d="M688 217.5H1322.2" stroke="#535353" stroke-width="1"/><path d="M688 268.5H1322.2" stroke="#535353" stroke-width="1"/><path d="M688 318.5H1322.2" stroke="#535353" stroke-width="1"/><path d="M688 369.5H1322.2" stroke="#535353" stroke-width="1"/><path d="M688 419.5H1322.2" stroke="#535353" stroke-width="1"/><path d="M836.2 151.2C831 154.6 828 158 829.2 162.6L869 279.6C870.6 284 873 286.2 877 286.2H886C889 286.2 890.6 287.6 892.4 290.4" fill="none" stroke="#a0a0a0" stroke-width="5.2" stroke-linejoin="round" stroke-linecap="round"/><path d="M1168.2 152.6C1173 156.4 1175.6 160.4 1174 165.6L1131.6 279.6C1130 284 1127.6 285.6 1123.6 285.6H1116C1113 285.6 1111 287.4 1109.6 290.4" fill="none" stroke="#a0a0a0" stroke-width="5.2" stroke-linejoin="round" stroke-linecap="round"/><path d="M836 152C831.6 155 829 158 830 162.4L869.6 279.4" stroke="#8e8e8e" stroke-width="0.7" fill="none" /><path d="M1168.4 153.4C1172.4 156.8 1174.6 160.4 1173.2 165.4L1131 279.4" stroke="#8e8e8e" stroke-width="0.7" fill="none" /><path d="M899 291.2H1103" stroke="#ababab" stroke-width="1.1" fill="none" /><path d="M899 304.8H1103" stroke="#ababab" stroke-width="1.1" fill="none" /><path d="M899 316.4H1103" stroke="#ababab" stroke-width="1.1" fill="none" /><path d="M899 320.3H1103" stroke="#ababab" stroke-width="1.1" fill="none" /><path d="M899 332.4H1103" stroke="#ababab" stroke-width="1.1" fill="none" /><path d="M899 346.3H1103" stroke="#ababab" stroke-width="1.1" fill="none" /><path d="M899 318.4H1103" stroke="#8c8c8c" stroke-width="2.6" fill="none" /><rect x="885.7" y="288.4" width="15.2" height="60.6" rx="3.6" fill="#9f9f9f"/><rect x="1101" y="288.4" width="15.2" height="60.6" rx="3.6" fill="#9f9f9f"/><rect x="999.6" y="317.4" width="1.6" height="1.6" fill="#c4c4c4"/><path d="M1280.4 143.9L1280.4 121.2" stroke="#3f7ff0" stroke-width="1.8" fill="none" /><path d="M1280.4 143.9L1302.9 143.9" stroke="#f04040" stroke-width="1.8" fill="none" /><path d="M1277.1 109H1284.1L1277.1 117.2H1284.1" stroke="#3f7ff0" stroke-width="1.7" fill="none"/><path d="M1308.6 141.2L1315.6 151M1315.6 141.2L1308.6 151" stroke="#f04040" stroke-width="1.7" fill="none"/><path d="M1276.9 141.2L1280.4 146.1L1283.9 141.2M1280.4 146.1V151" stroke="#35c46c" stroke-width="1.7" fill="none"/></svg>
<div style="left:692px;top:104.8px;width:31.5px;height:17.8px;background:rgba(40,40,40,.28);border-radius:4px;"></div>
<span class="t" style="left:694.14px;top:105.5px;color:#e4e4e4;transform:scaleX(1.050);">上面</span>
<div style="left:1179.9px;top:414.8px;width:138px;height:17.8px;background:rgba(40,40,40,.2);border-radius:4px;"></div>
<span class="t" style="left:1181.55px;top:416.2px;font-size:12.4px;line-height:16.4px;color:#e2e2e2;transform:scaleX(0.844);">グリッド</span>
<span class="t" style="left:1222.09px;top:416.2px;font-size:12.4px;line-height:16.4px;color:#e2e2e2;transform:scaleX(1.084);">間隔</span>
<span class="t" style="left:1252.97px;top:416.2px;font-size:12.4px;line-height:16.4px;color:#e2e2e2;transform:scaleX(1.333);">:</span>
<span class="t" style="left:1259.54px;top:416.2px;font-size:12.4px;line-height:16.4px;color:#e2e2e2;transform:scaleX(1.113);">500 mm</span>
<div style="left:48px;top:470px;width:635.2px;height:334px;background:#696969;"></div>
<svg style="left:48px;top:470px;overflow:hidden" width="635.2" height="334" viewBox="48 470 635.2 334"><path d="M65.5 470V804" stroke="#535353" stroke-width="1"/><path d="M168.5 470V804" stroke="#535353" stroke-width="1"/><path d="M272.5 470V804" stroke="#535353" stroke-width="1"/><path d="M375.5 470V804" stroke="#535353" stroke-width="1"/><path d="M479.5 470V804" stroke="#535353" stroke-width="1"/><path d="M583.5 470V804" stroke="#535353" stroke-width="1"/><path d="M48 509.5H683.2" stroke="#535353" stroke-width="1"/><path d="M48 613.5H683.2" stroke="#535353" stroke-width="1"/><path d="M48 716.5H683.2" stroke="#535353" stroke-width="1"/><circle cx="273.4" cy="642.7" r="56.8" fill="none" stroke="#a0a0a0" stroke-width="11"/><circle cx="273.4" cy="642.7" r="62.3" fill="none" stroke="#a9a9a9" stroke-width=".8"/><circle cx="273.4" cy="642.7" r="51.3" fill="none" stroke="#a9a9a9" stroke-width=".8"/><circle cx="273.4" cy="642.7" r="32.3" fill="none" stroke="#a9a9a9" stroke-width="1.1"/><circle cx="273.4" cy="642.7" r="29.2" fill="none" stroke="#a9a9a9" stroke-width="1.1"/><path d="M277 591.5L275.6 613.6 M271.3 673L269.9 694 M222.4 639.2L244.4 640.6 M305.6 644.8L326 646.6" stroke="#a9a9a9" stroke-width="1.1" fill="none" /><rect x="272.5" y="641.8000000000001" width="1.8" height="1.8" fill="#b4b4b4"/><path d="M334 643.4L618.6 661.1" stroke="#a2a2a2" stroke-width="7.4" fill="none" stroke-opacity=".45" stroke-linecap="round"/><path d="M334.19 640.31L618.79 658.01" stroke="#a9a9a9" stroke-width="1.15" fill="none" /><path d="M334 643.4L618.6 661.1" stroke="#a9a9a9" stroke-width="1.15" fill="none" /><path d="M333.81 646.49L618.41 664.19" stroke="#a9a9a9" stroke-width="1.15" fill="none" /><ellipse cx="618.6" cy="661.1" rx="2.2" ry="3.5" transform="rotate(3.56 618.6 661.1)" fill="none" stroke="#a9a9a9" stroke-width="1"/><path d="M333 656.8L612.2 708.1" stroke="#a2a2a2" stroke-width="7.4" fill="none" stroke-opacity=".45" stroke-linecap="round"/><path d="M333.56 653.75L612.76 705.05" stroke="#a9a9a9" stroke-width="1.15" fill="none" /><path d="M333 656.8L612.2 708.1" stroke="#a9a9a9" stroke-width="1.15" fill="none" /><path d="M332.44 659.85L611.64 711.15" stroke="#a9a9a9" stroke-width="1.15" fill="none" /><ellipse cx="612.2" cy="708.1" rx="2.2" ry="3.5" transform="rotate(10.41 612.2 708.1)" fill="none" stroke="#a9a9a9" stroke-width="1"/><path d="M641.2 511.9L641.2 489.2" stroke="#35c46c" stroke-width="1.8" fill="none" /><path d="M641.2 511.9L663.7 511.9" stroke="#3f7ff0" stroke-width="1.8" fill="none" /><path d="M637.8 476.2L641.3 481.1L644.8 476.2M641.3 481.1V486" stroke="#35c46c" stroke-width="1.7" fill="none"/><path d="M669.4 510H676.4L669.4 518.2H676.4" stroke="#3f7ff0" stroke-width="1.7" fill="none"/><path d="M637.7 509.2L644.7 519M644.7 509.2L637.7 519" stroke="#f04040" stroke-width="1.7" fill="none"/></svg>
<div style="left:51.3px;top:472.8px;width:31.5px;height:17.8px;background:rgba(40,40,40,.28);border-radius:4px;"></div>
<span class="t" style="left:53.44px;top:473.5px;color:#e4e4e4;transform:scaleX(1.050);">右面</span>
<div style="left:540.6px;top:781.8px;width:138px;height:17.8px;background:rgba(40,40,40,.2);border-radius:4px;"></div>
<span class="t" style="left:542.25px;top:783.2px;font-size:12.4px;line-height:16.4px;color:#e2e2e2;transform:scaleX(0.844);">グリッド</span>
<span class="t" style="left:582.79px;top:783.2px;font-size:12.4px;line-height:16.4px;color:#e2e2e2;transform:scaleX(1.084);">間隔</span>
<span class="t" style="left:613.67px;top:783.2px;font-size:12.4px;line-height:16.4px;color:#e2e2e2;transform:scaleX(1.333);">:</span>
<span class="t" style="left:620.24px;top:783.2px;font-size:12.4px;line-height:16.4px;color:#e2e2e2;transform:scaleX(1.113);">500 mm</span>
<div style="left:688px;top:470px;width:634.2px;height:334px;background:#696969;"></div>
<svg style="left:688px;top:470px;overflow:hidden" width="634.2" height="334" viewBox="688 470 634.2 334"><path d="M772.5 470V804" stroke="#535353" stroke-width="1"/><path d="M858.5 470V804" stroke="#535353" stroke-width="1"/><path d="M943.5 470V804" stroke="#535353" stroke-width="1"/><path d="M1028.5 470V804" stroke="#535353" stroke-width="1"/><path d="M1114.5 470V804" stroke="#535353" stroke-width="1"/><path d="M1199.5 470V804" stroke="#535353" stroke-width="1"/><path d="M1284.5 470V804" stroke="#535353" stroke-width="1"/><path d="M688 539.5H1322.2" stroke="#535353" stroke-width="1"/><path d="M688 624.5H1322.2" stroke="#535353" stroke-width="1"/><path d="M688 709.5H1322.2" stroke="#535353" stroke-width="1"/><path d="M688 794.5H1322.2" stroke="#535353" stroke-width="1"/><path d="M840 601.6H1188" stroke="#ababab" stroke-width="1.2" fill="none" /><path d="M840 625.4H1188" stroke="#ababab" stroke-width="1.2" fill="none" /><path d="M840 672H1188" stroke="#ababab" stroke-width="1.2" fill="none" /><path d="M840 696H1188" stroke="#ababab" stroke-width="1.2" fill="none" /><path d="M840 646H1188 M840 648.3H1188 M840 650.6H1188" stroke="#acacac" stroke-width="1" fill="none" /><rect x="1012.4" y="648" width="1.8" height="1.8" fill="#d0d0d0"/><path d="M820 647.3H797L729 662.6" stroke="#a3a3a3" stroke-width="8.2" fill="none" stroke-linejoin="round" stroke-linecap="round"/><path d="M820 645.2H797L729 660.5 M820 649.4H797L729 664.7" stroke="#8e8e8e" stroke-width=".8" fill="none" stroke-linejoin="round" stroke-linecap="round"/><ellipse cx="729.6" cy="663.6" rx="7" ry="5" fill="#a3a3a3"/><ellipse cx="728.6" cy="662.8" rx="2.6" ry="1.6" fill="#7e7e7e"/><path d="M1207 662.8H1232L1299 697.4" stroke="#a3a3a3" stroke-width="8.2" fill="none" stroke-linejoin="round" stroke-linecap="round"/><path d="M1207 660.8H1232.6L1300 695.6 M1207 664.8H1231.4L1298 699.2" stroke="#8e8e8e" stroke-width=".8" fill="none" stroke-linejoin="round" stroke-linecap="round"/><ellipse cx="1299" cy="701" rx="7.6" ry="5.6" transform="rotate(-25 1299 701)" fill="#a3a3a3"/><ellipse cx="1296.6" cy="703" rx="2.6" ry="1.8" fill="#7e7e7e"/><rect x="818.4" y="601.4" width="22" height="94.8" rx="2.5" fill="none" stroke="#a6a6a6" stroke-width="1"/><rect x="821.4" y="597.4" width="21.4" height="102.8" rx="2" fill="#a1a1a1"/><rect x="1187" y="601.4" width="21.4" height="94.8" rx="2.5" fill="none" stroke="#a6a6a6" stroke-width="1"/><rect x="1185.4" y="597.4" width="19.8" height="102.8" rx="2" fill="#a1a1a1"/><path d="M1280.4 511.9L1280.4 489.2" stroke="#35c46c" stroke-width="1.8" fill="none" /><path d="M1280.4 511.9L1302.9 511.9" stroke="#f04040" stroke-width="1.8" fill="none" /><path d="M1277 476.2L1280.5 481.1L1284 476.2M1280.5 481.1V486" stroke="#35c46c" stroke-width="1.7" fill="none"/><path d="M1308.6 509.2L1315.6 519M1315.6 509.2L1308.6 519" stroke="#f04040" stroke-width="1.7" fill="none"/><path d="M1276.9 510H1283.9L1276.9 518.2H1283.9" stroke="#3f7ff0" stroke-width="1.7" fill="none"/></svg>
<div style="left:692px;top:472.8px;width:31.5px;height:17.8px;background:rgba(40,40,40,.28);border-radius:4px;"></div>
<span class="t" style="left:694.14px;top:473.5px;color:#e4e4e4;transform:scaleX(1.050);">前面</span>
<div style="left:1180.6px;top:781.8px;width:138px;height:17.8px;background:rgba(40,40,40,.2);border-radius:4px;"></div>
<span class="t" style="left:1182.25px;top:783.2px;font-size:12.4px;line-height:16.4px;color:#e2e2e2;transform:scaleX(0.844);">グリッド</span>
<span class="t" style="left:1222.79px;top:783.2px;font-size:12.4px;line-height:16.4px;color:#e2e2e2;transform:scaleX(1.084);">間隔</span>
<span class="t" style="left:1253.67px;top:783.2px;font-size:12.4px;line-height:16.4px;color:#e2e2e2;transform:scaleX(1.333);">:</span>
<span class="t" style="left:1260.24px;top:783.2px;font-size:12.4px;line-height:16.4px;color:#e2e2e2;transform:scaleX(1.113);">500 mm</span>
<!-- right object palette -->
<div style="left:1326px;top:72px;width:45px;height:44px;background:#3e3e3e;border-radius:5px;"></div>
<div style="left:1326px;top:129px;width:45px;height:134.4px;background:#3e3e3e;border-radius:5px;"></div>
<div style="left:1327px;top:172.8px;width:43px;height:1px;background:#363636;"></div>
<div style="left:1327px;top:217.8px;width:43px;height:1px;background:#363636;"></div>
<div style="left:1326px;top:277px;width:45px;height:89px;background:#3e3e3e;border-radius:5px;"></div>
<div style="left:1327px;top:320px;width:43px;height:1px;background:#363636;"></div>
<div style="left:1326px;top:372px;width:45px;height:88.5px;background:#3e3e3e;border-radius:5px;"></div>
<div style="left:1327px;top:415px;width:43px;height:1px;background:#363636;"></div>
<div style="left:1326px;top:467px;width:45px;height:44px;background:#3e3e3e;border-radius:5px;"></div>
<div style="left:1326px;top:523.8px;width:45px;height:179.8px;background:#3e3e3e;border-radius:5px;"></div>
<div style="left:1327px;top:568px;width:43px;height:1px;background:#363636;"></div>
<div style="left:1327px;top:613.1px;width:43px;height:1px;background:#363636;"></div>
<div style="left:1327px;top:658px;width:43px;height:1px;background:#363636;"></div>
<div style="left:1326px;top:729px;width:45px;height:44.6px;background:#3e3e3e;border-radius:5px;"></div>
<svg style="left:1326px;top:72px;" width="45" height="705" viewBox="1326 72 45 705"><path d="M1339.4 82.4V104H1361.4" stroke="#cfd6ff" stroke-width="2.2" fill="none" /><path d="M1334.8000000000002 86.6L1339.4 81.6L1344.0 86.6 M1357.4 99.4L1362.4 104L1357.4 108.6" stroke="#cfd6ff" stroke-width="2.2" fill="none" /><circle cx="1354.8000000000002" cy="86.4" r="6.6" fill="#cfd6ff"/><path d="M0 0V0H0Z" fill="none"/><rect x="1337" y="140" width="23.6" height="23.2" fill="none" stroke="#8fd8f6" stroke-width="2.5"/><path d="M1370 167V173H1364Z" fill="#8a8a8a"/><path d="M1348.6 180.8L1361.6 188.20000000000002V203.20000000000002L1348.6 210.8L1335.6 203.20000000000002V188.20000000000002Z" fill="#8fd8f6" /><path d="M1335.6 188.20000000000002L1348.6 195.8L1361.6 188.20000000000002 M1348.6 195.8V210.8" stroke="#3e3e3e" stroke-width="1.6" fill="none" /><path d="M1370 212V218H1364Z" fill="#8a8a8a"/><path d="M1336.8 234.2V228.2H1360.6V234.2 M1348.7 228.2V254.4 M1342 254.4H1355.4" stroke="#8fd8f6" stroke-width="2.5" fill="none" /><path d="M1370 257V263H1364Z" fill="#8a8a8a"/><circle cx="1348.5" cy="298.9" r="7.8" fill="#63d872"/><path d="M1348.5 286.5L1360 291.6L1360 306.6L1348.5 311.4L1337 306.6L1337 291.6Z" stroke="#e0e0e0" stroke-width="1.9" fill="none" stroke-dasharray="4.4 2.6" stroke-dashoffset="-2"/><rect x="1346.2" y="284.2" width="4.6" height="4.6" fill="#3e3e3e" stroke="#f4f4f4" stroke-width="1.3"/><rect x="1357.7" y="289.3" width="4.6" height="4.6" fill="#3e3e3e" stroke="#f4f4f4" stroke-width="1.3"/><rect x="1357.7" y="304.3" width="4.6" height="4.6" fill="#3e3e3e" stroke="#f4f4f4" stroke-width="1.3"/><rect x="1346.2" y="309.1" width="4.6" height="4.6" fill="#3e3e3e" stroke="#f4f4f4" stroke-width="1.3"/><rect x="1334.7" y="304.3" width="4.6" height="4.6" fill="#3e3e3e" stroke="#f4f4f4" stroke-width="1.3"/><rect x="1334.7" y="289.3" width="4.6" height="4.6" fill="#3e3e3e" stroke="#f4f4f4" stroke-width="1.3"/><path d="M1370 314V320H1364Z" fill="#8a8a8a"/><path d="M1348.5 328.9L1359.7 334.4L1348.5 340.7L1337.3 334.4Z M1334.2 338.8L1345.3 345.1V358.5L1334.2 351.9Z M1362.8 338.8L1351.6 345.1V358.5L1362.8 351.9Z" fill="#63d872" /><path d="M1370 359.6V365.6H1364Z" fill="#8a8a8a"/><path d="M1336.8 385.8L1345.8 379.8L1352.8 382C1356 384.4 1358 386.6 1358.8 389C1360.4 393 1361 397 1361 400.8L1351.2 408.2L1341.2 402.4V399.4L1336.8 394.8Z M1341.4 387.4C1347 390 1350 396 1350.4 403" stroke="#a9a4f8" stroke-width="2" fill="none" stroke-linejoin="round"/><path d="M1370 409V415H1364Z" fill="#8a8a8a"/><path d="M1337.4 428V450.4H1359" stroke="#a9a4f8" stroke-width="2.1" fill="none" /><path d="M1337.4 424.2L1341.6 430.4H1333.2Z M1363.6 450.4L1357.6 454.4V446.4Z" fill="#a9a4f8" /><path d="M1354.9 424.59999999999997L1362.3000000000002 428.79999999999995V437.09999999999997L1354.9 441.29999999999995L1347.5 437.09999999999997V428.79999999999995Z M1347.5 428.79999999999995L1354.9 433.0L1362.3000000000002 428.79999999999995 M1354.9 433.0V441.29999999999995" stroke="#a9a4f8" stroke-width="1.4" fill="none" /><path d="M1370 454V460H1364Z" fill="#8a8a8a"/><path d="M1336.4 481.8L1347.2 488.4V503.4L1336.4 496.6Z M1350 475.6L1361 481.8V496.2L1348.4 489.2 M1350 475.6L1347.8 488.4 M1342 492.6L1355.4 484.6" stroke="#f2a8e8" stroke-width="1.8" fill="none" stroke-linejoin="round"/><path d="M1370 504.6V510.6H1364Z" fill="#8a8a8a"/><circle cx="1347.6" cy="545.6" r="13.6" fill="none" stroke="#cfd6ff" stroke-width="2"/><ellipse cx="1347.6" cy="545.6" rx="5.6" ry="13.6" fill="none" stroke="#cfd6ff" stroke-width="1.7"/><path d="M1334.0 545.6H1361.1999999999998 M1336.1999999999998 538.6H1359.0 M1336.1999999999998 552.6H1359.0" stroke="#cfd6ff" stroke-width="1.7" fill="none" /><rect x="1350.4" y="550.2" width="13.8" height="10.8" rx="2.4" fill="#0a0a0a"/><text x="1357.3" y="558.8000000000001" font-size="8.8" font-weight="700" fill="#fff" text-anchor="middle" font-family="Liberation Sans,sans-serif">ST</text><path d="M1370 562V568H1364Z" fill="#8a8a8a"/><path d="M1334.6 586.6H1362.6V599.6A2 2 0 0 1 1360.6 601.6H1336.6A2 2 0 0 1 1334.6 599.6Z" stroke="#cfd6ff" stroke-width="2.2" fill="none" /><path d="M1333.6 578.6H1363.6V587H1333.6Z" fill="#cfd6ff" /><path d="M1340.2 578h3.2l2.4 5.4h-3.2z" fill="#3e3e3e" /><path d="M1347.6000000000001 578h3.2l2.4 5.4h-3.2z" fill="#3e3e3e" /><path d="M1355.0 578h3.2l2.4 5.4h-3.2z" fill="#3e3e3e" /><path d="M1336.8 634.4V629.6A1.6 1.6 0 0 1 1338.4 628H1348.6A1.6 1.6 0 0 1 1350.2 629.6V634.4" stroke="#cfd6ff" stroke-width="2" fill="none" /><path d="M1336 634.4H1354A1.6 1.6 0 0 1 1355.6 636V646.6A1.6 1.6 0 0 1 1354 648.2H1336A1.6 1.6 0 0 1 1334.4 646.6V636A1.6 1.6 0 0 1 1336 634.4Z" stroke="#cfd6ff" stroke-width="2.2" fill="none" /><path d="M1356.4 640L1363.4 635V647Z" fill="#cfd6ff" /><rect x="1350.4" y="641.2" width="13.8" height="10.8" rx="2.4" fill="#0a0a0a"/><text x="1357.3" y="649.8000000000001" font-size="8.8" font-weight="700" fill="#fff" text-anchor="middle" font-family="Liberation Sans,sans-serif">ST</text><path d="M1370 652V658H1364Z" fill="#8a8a8a"/><path d="M1343.4 689.2C1338.4 684.6 1339.4 673.0 1348.4 673.0C1357.4 673.0 1358.4 684.6 1353.4 689.2 M1343.8000000000002 692.2H1353.0 M1345.0 695.2H1351.8000000000002" stroke="#cfd6ff" stroke-width="2" fill="none" /><path d="M1348.4 669.2V665.2 M1340.0 672.6L1337.2 669.8000000000001 M1356.8000000000002 672.6L1359.6000000000001 669.8000000000001 M1336.8000000000002 680.6H1333.0 M1360.0 680.6H1363.8000000000002" stroke="#cfd6ff" stroke-width="2" fill="none" /><rect x="1350.4" y="686.2" width="13.8" height="10.8" rx="2.4" fill="#0a0a0a"/><text x="1357.3" y="694.8000000000001" font-size="8.8" font-weight="700" fill="#fff" text-anchor="middle" font-family="Liberation Sans,sans-serif">ST</text><path d="M1370 697V703H1364Z" fill="#8a8a8a"/><path d="M1359.46 744.5L1359.46 757.5L1348.2 764L1336.94 757.5L1336.94 744.5L1344.2 740.4" stroke="#585858" stroke-width="1.6" fill="none" /><path d="M1342.8 756.6L1344.2 751.6L1353.2 742.6L1356.8 746.2L1347.8 755.2Z M1354.2 741.4L1355.8 739.8L1359.4 743.4L1357.8 745Z" fill="#585858" /><path d="M1370 767V773H1364Z" fill="#6a6a6a"/></svg>
<!-- object manager -->
<div style="left:1372px;top:36px;width:529px;height:495.5px;background:#1b1b1b;"></div>
<div style="left:1373px;top:36px;width:527px;height:28.5px;background:#1c1c1c;"></div>
<div style="left:1373px;top:36px;width:89px;height:29px;background:#2b2b2b;border-radius:5px 0 0 0;"></div>
<span class="t" style="left:1387.11px;top:42.1px;color:#f0f0f0;transform:scaleX(0.791);">オブジェクト</span>
<span class="t" style="left:1477.38px;top:42.1px;color:#a8a8a8;transform:scaleX(0.822);">テイク</span>
<div style="left:1373px;top:64.5px;width:527px;height:28.7px;background:#2b2b2b;"></div>
<svg style="left:1381px;top:73px;" width="18" height="13" viewBox="1381 73 18 13"><rect x="1381" y="73.2" width="18" height="2.5" fill="#a0a0a0"/><rect x="1381" y="78.3" width="18" height="2.5" fill="#a0a0a0"/><rect x="1381" y="83.4" width="18" height="2.5" fill="#a0a0a0"/></svg>
<span class="t" style="left:1411.37px;top:69.3px;transform:scaleX(0.743);">ファイル</span>
<span class="t" style="left:1469px;top:69.3px;transform:scaleX(1.043);">編集</span>
<span class="t" style="left:1514.34px;top:69.3px;transform:scaleX(1.046);">表示</span>
<span class="t" style="left:1558.81px;top:69.3px;transform:scaleX(0.781);">オブジェクト</span>
<span class="t" style="left:1635.79px;top:69.3px;transform:scaleX(0.808);">タグ</span>
<span class="t" style="left:1675.06px;top:69.3px;transform:scaleX(0.756);">ブックマーク</span>
<svg style="left:1800px;top:68px;" width="100" height="22" viewBox="1800 68 100 22"><circle cx="1810.6" cy="76.6" r="5.4" fill="none" stroke="#a0a0a0" stroke-width="1.8"/><path d="M1814.6 80.8L1821 87.4" stroke="#a0a0a0" stroke-width="2" fill="none" /><path d="M1831 79.6L1837.6 72.6L1844.2 79.6V87.4H1840V81.6H1835.2V87.4H1831Z" stroke="#a0a0a0" stroke-width="1.7" fill="none" /><path d="M1854.4 73.8H1870.8 M1857.4 79H1867.8 M1860.2 84.2H1865" stroke="#a0a0a0" stroke-width="2.2" fill="none" /><path d="M1886.6 72.2H1881.2A1 1 0 0 0 1880.2 73.2V86.4A1 1 0 0 0 1881.2 87.4H1894.4A1 1 0 0 0 1895.4 86.4V81 M1884.6 83L1895 72.6 M1889.4 71.8H1895.8V78.2" stroke="#a0a0a0" stroke-width="1.8" fill="none" /></svg>
<div style="left:1373px;top:94.6px;width:524px;height:435px;background:#2b2b2b;"></div>
<div style="left:1373px;top:94.6px;width:524px;height:25px;background:#262626;"></div>
<div style="left:1373px;top:144.6px;width:524px;height:25px;background:#262626;"></div>
<div style="left:1373px;top:194.6px;width:524px;height:25px;background:#262626;"></div>
<div style="left:1373px;top:244.6px;width:524px;height:25px;background:#262626;"></div>
<div style="left:1373px;top:294.6px;width:524px;height:25px;background:#262626;"></div>
<div style="left:1373px;top:344.6px;width:524px;height:25px;background:#262626;"></div>
<div style="left:1897px;top:94.6px;width:3px;height:435px;background:#2e2e2e;"></div>
<div style="left:1640px;top:94.6px;width:1.2px;height:435px;background:#1c1c1c;"></div>
<svg style="left:1373px;top:94.6px;" width="526" height="305" viewBox="1373 94.6 526 305"><path d="M1384.5 96.6V383.40000000000003H1395.6" stroke="#5a5a5a" stroke-width="1" fill="none" /><path d="M1399.5 116.39999999999999V207.4 M1399.5 182.4H1411" stroke="#5a5a5a" stroke-width="1" fill="none" /><path d="M1414.5 141.4V157.4H1426" stroke="#5a5a5a" stroke-width="1" fill="none" /><path d="M1414.5 216.4V307.40000000000003" stroke="#5a5a5a" stroke-width="1" fill="none" /><path d="M1429.5 241.4V282.40000000000003H1441 M1429.5 257.4H1441" stroke="#5a5a5a" stroke-width="1" fill="none" /><path d="M1429.5 316.40000000000003V357.40000000000003H1441 M1429.5 332.40000000000003H1441" stroke="#5a5a5a" stroke-width="1" fill="none" /><rect x="1378.5" y="101.89999999999999" width="11" height="11" fill="#262626" stroke="#8a8a8a" stroke-width="1"/><path d="M1381.0 107.39999999999999H1387.0" stroke="#b0b0b0" stroke-width="1.2" fill="none" /><path d="M1390.0 107.39999999999999H1394.5" stroke="#5a5a5a" stroke-width="1" fill="none" /><path d="M1399.6 100.8V113.8H1412.6" stroke="#cfd6ff" stroke-width="1.7" fill="none" /><path d="M1396.6 103.39999999999999L1399.6 100.2L1402.6 103.39999999999999 M1410.0 110.8L1413.1999999999998 113.8L1410.0 116.8" stroke="#cfd6ff" stroke-width="1.7" fill="none" /><circle cx="1409.1999999999998" cy="103.39999999999999" r="4" fill="#cfd6ff"/><rect x="1586.2" y="100.8" width="13" height="13" rx="2.6" fill="#5c5c5c"/><path d="M1589.4 110.6L1596 103.99999999999999" stroke="#2a2a2a" stroke-width="2.6" fill="none" stroke-linecap="round"/><circle cx="1610" cy="102.8" r="4" fill="#5a5a5a"/><circle cx="1610" cy="113.69999999999999" r="4" fill="#5a5a5a"/><rect x="1393.5" y="126.9" width="11" height="11" fill="#2b2b2b" stroke="#8a8a8a" stroke-width="1"/><path d="M1396.0 132.4H1402.0" stroke="#b0b0b0" stroke-width="1.2" fill="none" /><path d="M1405.0 132.4H1409.5" stroke="#5a5a5a" stroke-width="1" fill="none" /><path d="M1418.1 124.80000000000001C1418.6 129.50000000000003 1421.0 130.50000000000003 1424.0 131.60000000000002C1426.3999999999999 132.8 1425.6 135.60000000000002 1422.6 136.8C1420.6 137.60000000000002 1419.0 138.00000000000003 1418.6 141.8H1417.6C1417.1999999999998 138.00000000000003 1415.6 137.60000000000002 1413.6 136.8C1410.6 135.60000000000002 1409.8 132.8 1412.1999999999998 131.60000000000002C1415.1999999999998 130.50000000000003 1417.6 129.50000000000003 1418.1 124.80000000000001Z" fill="#63d872" /><path d="M1417.5 128.20000000000002C1417.1 130.8 1414.6999999999998 131.8 1413.1 133.8" stroke="#eaffea" stroke-width="0.9" fill="none" /><path d="M1413.1 135.60000000000002C1416.1 137.20000000000002 1420.1 137.20000000000002 1423.1 135.60000000000002" stroke="#3aa855" stroke-width="0.9" fill="none" /><rect x="1586.2" y="125.80000000000001" width="13" height="13" rx="2.6" fill="#5c5c5c"/><path d="M1589.4 135.6L1596 129.0" stroke="#2a2a2a" stroke-width="2.6" fill="none" stroke-linecap="round"/><circle cx="1610" cy="127.80000000000001" r="4" fill="#e05a5c"/><circle cx="1610" cy="138.70000000000002" r="4" fill="#e05a5c"/><path d="M1620 132.0L1624.6 136.6L1633.4 127.0" stroke="#52e070" stroke-width="2.3" fill="none" /><path d="M1646.4 139.0V124.4H1661.4" stroke="#a9a4f8" stroke-width="1.7" fill="none" /><path d="M1649.4 127.2H1657.6C1657.6 132.20000000000002 1654.2 135.6 1649.4 135.6Z" fill="#a9a4f8" /><g><rect x="1667" y="120.10000000000001" width="23" height="23" fill="#6b6d70"/><path d="M1667 120.1h2.88v2.88h-2.88zM1667 125.85h2.88v2.88h-2.88zM1667 131.6h2.88v2.88h-2.88zM1667 137.35h2.88v2.88h-2.88zM1669.88 122.98h2.88v2.88h-2.88zM1669.88 128.73h2.88v2.88h-2.88zM1669.88 134.48h2.88v2.88h-2.88zM1669.88 140.23h2.88v2.88h-2.88zM1672.75 120.1h2.88v2.88h-2.88zM1672.75 125.85h2.88v2.88h-2.88zM1672.75 131.6h2.88v2.88h-2.88zM1672.75 137.35h2.88v2.88h-2.88zM1675.62 122.98h2.88v2.88h-2.88zM1675.62 128.73h2.88v2.88h-2.88zM1675.62 134.48h2.88v2.88h-2.88zM1675.62 140.23h2.88v2.88h-2.88zM1678.5 120.1h2.88v2.88h-2.88zM1678.5 125.85h2.88v2.88h-2.88zM1678.5 131.6h2.88v2.88h-2.88zM1678.5 137.35h2.88v2.88h-2.88zM1681.38 122.98h2.88v2.88h-2.88zM1681.38 128.73h2.88v2.88h-2.88zM1681.38 134.48h2.88v2.88h-2.88zM1681.38 140.23h2.88v2.88h-2.88zM1684.25 120.1h2.88v2.88h-2.88zM1684.25 125.85h2.88v2.88h-2.88zM1684.25 131.6h2.88v2.88h-2.88zM1684.25 137.35h2.88v2.88h-2.88zM1687.12 122.98h2.88v2.88h-2.88zM1687.12 128.73h2.88v2.88h-2.88zM1687.12 134.48h2.88v2.88h-2.88zM1687.12 140.23h2.88v2.88h-2.88z" fill="#8d8f92"/><rect x="1667" y="138.10000000000002" width="23" height="5" fill="#8792a0" fill-opacity=".75"/><radialGradient id="mg1" cx=".36" cy=".3" r=".75"><stop offset="0" stop-color="#5d6e72"/><stop offset=".4" stop-color="#2f3c40"/><stop offset="1" stop-color="#0e1416"/></radialGradient><circle cx="1678.5" cy="131.60000000000002" r="11" fill="url(#mg1)"/><ellipse cx="1675.1" cy="127.20000000000002" rx="2" ry="2.8" fill="#9fb0b4" fill-opacity=".7"/></g><g><rect x="1692" y="120.10000000000001" width="23" height="23" fill="#6b6d70"/><path d="M1692 120.1h2.88v2.88h-2.88zM1692 125.85h2.88v2.88h-2.88zM1692 131.6h2.88v2.88h-2.88zM1692 137.35h2.88v2.88h-2.88zM1694.88 122.98h2.88v2.88h-2.88zM1694.88 128.73h2.88v2.88h-2.88zM1694.88 134.48h2.88v2.88h-2.88zM1694.88 140.23h2.88v2.88h-2.88zM1697.75 120.1h2.88v2.88h-2.88zM1697.75 125.85h2.88v2.88h-2.88zM1697.75 131.6h2.88v2.88h-2.88zM1697.75 137.35h2.88v2.88h-2.88zM1700.62 122.98h2.88v2.88h-2.88zM1700.62 128.73h2.88v2.88h-2.88zM1700.62 134.48h2.88v2.88h-2.88zM1700.62 140.23h2.88v2.88h-2.88zM1703.5 120.1h2.88v2.88h-2.88zM1703.5 125.85h2.88v2.88h-2.88zM1703.5 131.6h2.88v2.88h-2.88zM1703.5 137.35h2.88v2.88h-2.88zM1706.38 122.98h2.88v2.88h-2.88zM1706.38 128.73h2.88v2.88h-2.88zM1706.38 134.48h2.88v2.88h-2.88zM1706.38 140.23h2.88v2.88h-2.88zM1709.25 120.1h2.88v2.88h-2.88zM1709.25 125.85h2.88v2.88h-2.88zM1709.25 131.6h2.88v2.88h-2.88zM1709.25 137.35h2.88v2.88h-2.88zM1712.12 122.98h2.88v2.88h-2.88zM1712.12 128.73h2.88v2.88h-2.88zM1712.12 134.48h2.88v2.88h-2.88zM1712.12 140.23h2.88v2.88h-2.88z" fill="#8d8f92"/><rect x="1692" y="138.10000000000002" width="23" height="5" fill="#8792a0" fill-opacity=".75"/><radialGradient id="mg2" cx=".45" cy=".4" r=".62"><stop offset="0" stop-color="#7c8288" stop-opacity=".5"/><stop offset=".75" stop-color="#6a7076" stop-opacity=".7"/><stop offset="1" stop-color="#4c5560" stop-opacity=".95"/></radialGradient><circle cx="1703.5" cy="131.60000000000002" r="10.4" fill="url(#mg2)"/><path d="M1711.5 125.60000000000002A10 10 0 0 1 1713.1 134.60000000000002" stroke="#a8c0d8" stroke-width="0.8" fill="none" stroke-opacity=".7"/></g><g><rect x="1717" y="120.10000000000001" width="23" height="23" fill="#6b6d70"/><path d="M1717 120.1h2.88v2.88h-2.88zM1717 125.85h2.88v2.88h-2.88zM1717 131.6h2.88v2.88h-2.88zM1717 137.35h2.88v2.88h-2.88zM1719.88 122.98h2.88v2.88h-2.88zM1719.88 128.73h2.88v2.88h-2.88zM1719.88 134.48h2.88v2.88h-2.88zM1719.88 140.23h2.88v2.88h-2.88zM1722.75 120.1h2.88v2.88h-2.88zM1722.75 125.85h2.88v2.88h-2.88zM1722.75 131.6h2.88v2.88h-2.88zM1722.75 137.35h2.88v2.88h-2.88zM1725.62 122.98h2.88v2.88h-2.88zM1725.62 128.73h2.88v2.88h-2.88zM1725.62 134.48h2.88v2.88h-2.88zM1725.62 140.23h2.88v2.88h-2.88zM1728.5 120.1h2.88v2.88h-2.88zM1728.5 125.85h2.88v2.88h-2.88zM1728.5 131.6h2.88v2.88h-2.88zM1728.5 137.35h2.88v2.88h-2.88zM1731.38 122.98h2.88v2.88h-2.88zM1731.38 128.73h2.88v2.88h-2.88zM1731.38 134.48h2.88v2.88h-2.88zM1731.38 140.23h2.88v2.88h-2.88zM1734.25 120.1h2.88v2.88h-2.88zM1734.25 125.85h2.88v2.88h-2.88zM1734.25 131.6h2.88v2.88h-2.88zM1734.25 137.35h2.88v2.88h-2.88zM1737.12 122.98h2.88v2.88h-2.88zM1737.12 128.73h2.88v2.88h-2.88zM1737.12 134.48h2.88v2.88h-2.88zM1737.12 140.23h2.88v2.88h-2.88z" fill="#8d8f92"/><rect x="1717" y="138.10000000000002" width="23" height="5" fill="#8792a0" fill-opacity=".75"/><circle cx="1728.5" cy="131.60000000000002" r="10.4" fill="#5a6068" fill-opacity=".35"/><path d="M1724.5 123.00000000000003C1719.5 128.60000000000002 1720.5 136.60000000000002 1723.5 140.20000000000002 M1725.9 122.00000000000003C1722.5 128.60000000000002 1727.5 133.60000000000002 1724.5 141.20000000000002 M1729.1 121.60000000000002C1732.5 127.60000000000002 1725.5 133.60000000000002 1730.1 141.60000000000002 M1732.1 122.60000000000002C1736.5 128.60000000000002 1730.5 134.60000000000002 1734.1 140.20000000000002 M1735.1 125.00000000000003C1738.5 130.60000000000002 1737.1 135.60000000000002 1735.5 138.20000000000002" stroke="#0c0e10" stroke-width="1.5" fill="none" /></g><path d="M1434.1 151.4C1428.1 150.0 1424.5 155.4 1430.5 157.4C1436.1 159.4 1443.6999999999998 160.4 1440.1 163.6C1438.1 165.0 1436.1 165.0 1434.1 164.6" stroke="#86d4f2" stroke-width="1.5" fill="none" /><circle cx="1434.1" cy="151.4" r="1.9" fill="#fff"/><circle cx="1434.1" cy="164.6" r="1.9" fill="#fff"/><rect x="1586.2" y="150.8" width="13" height="13" rx="2.6" fill="#5c5c5c"/><path d="M1589.4 160.6L1596 154.0" stroke="#2a2a2a" stroke-width="2.6" fill="none" stroke-linecap="round"/><circle cx="1610" cy="152.8" r="4" fill="#e05a5c"/><circle cx="1610" cy="163.70000000000002" r="4" fill="#e05a5c"/><path d="M1620 157.0L1624.6 161.6L1633.4 152.0" stroke="#52e070" stroke-width="2.3" fill="none" /><path d="M1412.6 177.0V187.8A6.4 2.8 0 0 0 1425.4 187.8V177.0Z" fill="#8fd8f6" /><ellipse cx="1419" cy="177.0" rx="6.4" ry="2.8" fill="#8fd8f6" stroke="#2b2b2b" stroke-width="1"/><rect x="1586.2" y="175.8" width="13" height="13" rx="2.6" fill="#5c5c5c"/><path d="M1589.4 185.6L1596 179.0" stroke="#2a2a2a" stroke-width="2.6" fill="none" stroke-linecap="round"/><circle cx="1610" cy="177.8" r="4" fill="#5a5a5a"/><circle cx="1610" cy="188.70000000000002" r="4" fill="#5a5a5a"/><path d="M1620 182.0L1624.6 186.6L1633.4 177.0" stroke="#52e070" stroke-width="2.3" fill="none" /><path d="M1646.4 189.0V174.4H1661.4" stroke="#a9a4f8" stroke-width="1.7" fill="none" /><path d="M1649.4 177.20000000000002H1657.6C1657.6 182.20000000000002 1654.2 185.6 1649.4 185.6Z" fill="#a9a4f8" /><g><rect x="1667" y="170.1" width="23" height="23" fill="#6b6d70"/><path d="M1667 170.1h2.88v2.88h-2.88zM1667 175.85h2.88v2.88h-2.88zM1667 181.6h2.88v2.88h-2.88zM1667 187.35h2.88v2.88h-2.88zM1669.88 172.97h2.88v2.88h-2.88zM1669.88 178.72h2.88v2.88h-2.88zM1669.88 184.47h2.88v2.88h-2.88zM1669.88 190.22h2.88v2.88h-2.88zM1672.75 170.1h2.88v2.88h-2.88zM1672.75 175.85h2.88v2.88h-2.88zM1672.75 181.6h2.88v2.88h-2.88zM1672.75 187.35h2.88v2.88h-2.88zM1675.62 172.97h2.88v2.88h-2.88zM1675.62 178.72h2.88v2.88h-2.88zM1675.62 184.47h2.88v2.88h-2.88zM1675.62 190.22h2.88v2.88h-2.88zM1678.5 170.1h2.88v2.88h-2.88zM1678.5 175.85h2.88v2.88h-2.88zM1678.5 181.6h2.88v2.88h-2.88zM1678.5 187.35h2.88v2.88h-2.88zM1681.38 172.97h2.88v2.88h-2.88zM1681.38 178.72h2.88v2.88h-2.88zM1681.38 184.47h2.88v2.88h-2.88zM1681.38 190.22h2.88v2.88h-2.88zM1684.25 170.1h2.88v2.88h-2.88zM1684.25 175.85h2.88v2.88h-2.88zM1684.25 181.6h2.88v2.88h-2.88zM1684.25 187.35h2.88v2.88h-2.88zM1687.12 172.97h2.88v2.88h-2.88zM1687.12 178.72h2.88v2.88h-2.88zM1687.12 184.47h2.88v2.88h-2.88zM1687.12 190.22h2.88v2.88h-2.88z" fill="#8d8f92"/><rect x="1667" y="188.1" width="23" height="5" fill="#8792a0" fill-opacity=".75"/><radialGradient id="mg4" cx=".38" cy=".32" r=".7"><stop offset="0" stop-color="#4a4a4a"/><stop offset=".45" stop-color="#1c1c1c"/><stop offset="1" stop-color="#050505"/></radialGradient><circle cx="1678.5" cy="181.6" r="11" fill="url(#mg4)"/></g><rect x="1393.5" y="201.9" width="11" height="11" fill="#262626" stroke="#8a8a8a" stroke-width="1"/><path d="M1396.0 207.4H1402.0" stroke="#b0b0b0" stroke-width="1.2" fill="none" /><path d="M1405.0 207.4H1409.5" stroke="#5a5a5a" stroke-width="1" fill="none" /><path d="M1414.6 200.8V213.8H1427.6" stroke="#cfd6ff" stroke-width="1.7" fill="none" /><path d="M1411.6 203.4L1414.6 200.20000000000002L1417.6 203.4 M1425.0 210.8L1428.1999999999998 213.8L1425.0 216.8" stroke="#cfd6ff" stroke-width="1.7" fill="none" /><circle cx="1424.1999999999998" cy="203.4" r="4" fill="#cfd6ff"/><rect x="1586.2" y="200.8" width="13" height="13" rx="2.6" fill="#5c5c5c"/><path d="M1589.4 210.6L1596 204.0" stroke="#2a2a2a" stroke-width="2.6" fill="none" stroke-linecap="round"/><circle cx="1610" cy="202.8" r="4" fill="#5a5a5a"/><circle cx="1610" cy="213.70000000000002" r="4" fill="#5a5a5a"/><rect x="1408.5" y="226.9" width="11" height="11" fill="#2b2b2b" stroke="#8a8a8a" stroke-width="1"/><path d="M1411.0 232.4H1417.0" stroke="#b0b0b0" stroke-width="1.2" fill="none" /><path d="M1420.0 232.4H1424.5" stroke="#5a5a5a" stroke-width="1" fill="none" /><path d="M1431.6 236.0C1434.4 236.4 1434.6 233.0 1435.6 231.20000000000002C1436.6 229.20000000000002 1439.2 230.20000000000002 1440 227.6" stroke="#63d872" stroke-width="4.6" fill="none" stroke-linecap="round"/><path d="M1432.4 234.8C1434 234.8 1434 232.4 1435 230.4C1436 228.4 1438.4 229.0 1439.4 227.20000000000002" stroke="#c8ffd0" stroke-width="0.9" fill="none" /><ellipse cx="1429.9" cy="237.1" rx="2.8" ry="3.4" transform="rotate(25 1429.9 237.1)" fill="#262626" stroke="#fff" stroke-width="1.2"/><rect x="1586.2" y="225.8" width="13" height="13" rx="2.6" fill="#5c5c5c"/><path d="M1589.4 235.6L1596 229.0" stroke="#2a2a2a" stroke-width="2.6" fill="none" stroke-linecap="round"/><circle cx="1610" cy="227.8" r="4" fill="#5a5a5a"/><circle cx="1610" cy="238.70000000000002" r="4" fill="#5a5a5a"/><path d="M1620 232.0L1624.6 236.6L1633.4 227.0" stroke="#52e070" stroke-width="2.3" fill="none" /><path d="M1646.4 239.0V224.4H1661.4" stroke="#a9a4f8" stroke-width="1.7" fill="none" /><path d="M1649.4 227.20000000000002H1657.6C1657.6 232.20000000000002 1654.2 235.6 1649.4 235.6Z" fill="#a9a4f8" /><g><rect x="1667" y="220.1" width="23" height="23" fill="#6b6d70"/><path d="M1667 220.1h2.88v2.88h-2.88zM1667 225.85h2.88v2.88h-2.88zM1667 231.6h2.88v2.88h-2.88zM1667 237.35h2.88v2.88h-2.88zM1669.88 222.97h2.88v2.88h-2.88zM1669.88 228.72h2.88v2.88h-2.88zM1669.88 234.47h2.88v2.88h-2.88zM1669.88 240.22h2.88v2.88h-2.88zM1672.75 220.1h2.88v2.88h-2.88zM1672.75 225.85h2.88v2.88h-2.88zM1672.75 231.6h2.88v2.88h-2.88zM1672.75 237.35h2.88v2.88h-2.88zM1675.62 222.97h2.88v2.88h-2.88zM1675.62 228.72h2.88v2.88h-2.88zM1675.62 234.47h2.88v2.88h-2.88zM1675.62 240.22h2.88v2.88h-2.88zM1678.5 220.1h2.88v2.88h-2.88zM1678.5 225.85h2.88v2.88h-2.88zM1678.5 231.6h2.88v2.88h-2.88zM1678.5 237.35h2.88v2.88h-2.88zM1681.38 222.97h2.88v2.88h-2.88zM1681.38 228.72h2.88v2.88h-2.88zM1681.38 234.47h2.88v2.88h-2.88zM1681.38 240.22h2.88v2.88h-2.88zM1684.25 220.1h2.88v2.88h-2.88zM1684.25 225.85h2.88v2.88h-2.88zM1684.25 231.6h2.88v2.88h-2.88zM1684.25 237.35h2.88v2.88h-2.88zM1687.12 222.97h2.88v2.88h-2.88zM1687.12 228.72h2.88v2.88h-2.88zM1687.12 234.47h2.88v2.88h-2.88zM1687.12 240.22h2.88v2.88h-2.88z" fill="#8d8f92"/><rect x="1667" y="238.1" width="23" height="5" fill="#8792a0" fill-opacity=".75"/><radialGradient id="mg5" cx=".4" cy=".3" r=".75"><stop offset="0" stop-color="#d8d8d8"/><stop offset=".4" stop-color="#8a8a8a"/><stop offset="1" stop-color="#262626"/></radialGradient><circle cx="1678.5" cy="231.6" r="11" fill="url(#mg5)"/></g><circle cx="1449.1" cy="258.0" r="7.5" fill="none" stroke="#86d4f2" stroke-width="1.5"/><rect x="1586.2" y="250.79999999999998" width="13" height="13" rx="2.6" fill="#5c5c5c"/><path d="M1589.4 260.59999999999997L1596 253.99999999999997" stroke="#2a2a2a" stroke-width="2.6" fill="none" stroke-linecap="round"/><circle cx="1610" cy="252.79999999999998" r="4" fill="#5a5a5a"/><circle cx="1610" cy="263.7" r="4" fill="#5a5a5a"/><path d="M1620 257.0L1624.6 261.59999999999997L1633.4 251.99999999999997" stroke="#52e070" stroke-width="2.3" fill="none" /><path d="M1449.1 276.40000000000003C1443.1 275.00000000000006 1439.5 280.40000000000003 1445.5 282.40000000000003C1451.1 284.40000000000003 1458.6999999999998 285.40000000000003 1455.1 288.6000000000001C1453.1 290.00000000000006 1451.1 290.00000000000006 1449.1 289.6000000000001" stroke="#86d4f2" stroke-width="1.5" fill="none" /><circle cx="1449.1" cy="276.40000000000003" r="1.9" fill="#fff"/><circle cx="1449.1" cy="289.6000000000001" r="1.9" fill="#fff"/><rect x="1586.2" y="275.8" width="13" height="13" rx="2.6" fill="#5c5c5c"/><path d="M1589.4 285.6L1596 279.00000000000006" stroke="#2a2a2a" stroke-width="2.6" fill="none" stroke-linecap="round"/><circle cx="1610" cy="277.8" r="4" fill="#5a5a5a"/><circle cx="1610" cy="288.70000000000005" r="4" fill="#5a5a5a"/><path d="M1620 282.00000000000006L1624.6 286.6L1633.4 277.00000000000006" stroke="#52e070" stroke-width="2.3" fill="none" /><rect x="1408.5" y="301.90000000000003" width="11" height="11" fill="#262626" stroke="#8a8a8a" stroke-width="1"/><path d="M1411.0 307.40000000000003H1417.0" stroke="#b0b0b0" stroke-width="1.2" fill="none" /><path d="M1420.0 307.40000000000003H1424.5" stroke="#5a5a5a" stroke-width="1" fill="none" /><path d="M1431.6 311.00000000000006C1434.4 311.40000000000003 1434.6 308.00000000000006 1435.6 306.20000000000005C1436.6 304.20000000000005 1439.2 305.20000000000005 1440 302.6" stroke="#63d872" stroke-width="4.6" fill="none" stroke-linecap="round"/><path d="M1432.4 309.8C1434 309.8 1434 307.40000000000003 1435 305.40000000000003C1436 303.40000000000003 1438.4 304.00000000000006 1439.4 302.20000000000005" stroke="#c8ffd0" stroke-width="0.9" fill="none" /><ellipse cx="1429.9" cy="312.1" rx="2.8" ry="3.4" transform="rotate(25 1429.9 312.1)" fill="#262626" stroke="#fff" stroke-width="1.2"/><rect x="1586.2" y="300.8" width="13" height="13" rx="2.6" fill="#5c5c5c"/><path d="M1589.4 310.6L1596 304.00000000000006" stroke="#2a2a2a" stroke-width="2.6" fill="none" stroke-linecap="round"/><circle cx="1610" cy="302.8" r="4" fill="#5a5a5a"/><circle cx="1610" cy="313.70000000000005" r="4" fill="#5a5a5a"/><path d="M1620 307.00000000000006L1624.6 311.6L1633.4 302.00000000000006" stroke="#52e070" stroke-width="2.3" fill="none" /><path d="M1646.4 314.00000000000006V299.40000000000003H1661.4" stroke="#a9a4f8" stroke-width="1.7" fill="none" /><path d="M1649.4 302.20000000000005H1657.6C1657.6 307.20000000000005 1654.2 310.6 1649.4 310.6Z" fill="#a9a4f8" /><g><rect x="1667" y="295.1" width="23" height="23" fill="#6b6d70"/><path d="M1667 295.1h2.88v2.88h-2.88zM1667 300.85h2.88v2.88h-2.88zM1667 306.6h2.88v2.88h-2.88zM1667 312.35h2.88v2.88h-2.88zM1669.88 297.98h2.88v2.88h-2.88zM1669.88 303.73h2.88v2.88h-2.88zM1669.88 309.48h2.88v2.88h-2.88zM1669.88 315.23h2.88v2.88h-2.88zM1672.75 295.1h2.88v2.88h-2.88zM1672.75 300.85h2.88v2.88h-2.88zM1672.75 306.6h2.88v2.88h-2.88zM1672.75 312.35h2.88v2.88h-2.88zM1675.62 297.98h2.88v2.88h-2.88zM1675.62 303.73h2.88v2.88h-2.88zM1675.62 309.48h2.88v2.88h-2.88zM1675.62 315.23h2.88v2.88h-2.88zM1678.5 295.1h2.88v2.88h-2.88zM1678.5 300.85h2.88v2.88h-2.88zM1678.5 306.6h2.88v2.88h-2.88zM1678.5 312.35h2.88v2.88h-2.88zM1681.38 297.98h2.88v2.88h-2.88zM1681.38 303.73h2.88v2.88h-2.88zM1681.38 309.48h2.88v2.88h-2.88zM1681.38 315.23h2.88v2.88h-2.88zM1684.25 295.1h2.88v2.88h-2.88zM1684.25 300.85h2.88v2.88h-2.88zM1684.25 306.6h2.88v2.88h-2.88zM1684.25 312.35h2.88v2.88h-2.88zM1687.12 297.98h2.88v2.88h-2.88zM1687.12 303.73h2.88v2.88h-2.88zM1687.12 309.48h2.88v2.88h-2.88zM1687.12 315.23h2.88v2.88h-2.88z" fill="#8d8f92"/><rect x="1667" y="313.1" width="23" height="5" fill="#8792a0" fill-opacity=".75"/><radialGradient id="mg6" cx=".36" cy=".3" r=".7"><stop offset="0" stop-color="#8a8a8a"/><stop offset=".35" stop-color="#1a1a1a"/><stop offset="1" stop-color="#000"/></radialGradient><circle cx="1678.5" cy="306.6" r="11" fill="url(#mg6)"/><ellipse cx="1674.9" cy="302.0" rx="1.8" ry="2.6" fill="#fff" fill-opacity=".85"/></g><g><rect x="1692" y="295.1" width="23" height="23" fill="#6b6d70"/><path d="M1692 295.1h2.88v2.88h-2.88zM1692 300.85h2.88v2.88h-2.88zM1692 306.6h2.88v2.88h-2.88zM1692 312.35h2.88v2.88h-2.88zM1694.88 297.98h2.88v2.88h-2.88zM1694.88 303.73h2.88v2.88h-2.88zM1694.88 309.48h2.88v2.88h-2.88zM1694.88 315.23h2.88v2.88h-2.88zM1697.75 295.1h2.88v2.88h-2.88zM1697.75 300.85h2.88v2.88h-2.88zM1697.75 306.6h2.88v2.88h-2.88zM1697.75 312.35h2.88v2.88h-2.88zM1700.62 297.98h2.88v2.88h-2.88zM1700.62 303.73h2.88v2.88h-2.88zM1700.62 309.48h2.88v2.88h-2.88zM1700.62 315.23h2.88v2.88h-2.88zM1703.5 295.1h2.88v2.88h-2.88zM1703.5 300.85h2.88v2.88h-2.88zM1703.5 306.6h2.88v2.88h-2.88zM1703.5 312.35h2.88v2.88h-2.88zM1706.38 297.98h2.88v2.88h-2.88zM1706.38 303.73h2.88v2.88h-2.88zM1706.38 309.48h2.88v2.88h-2.88zM1706.38 315.23h2.88v2.88h-2.88zM1709.25 295.1h2.88v2.88h-2.88zM1709.25 300.85h2.88v2.88h-2.88zM1709.25 306.6h2.88v2.88h-2.88zM1709.25 312.35h2.88v2.88h-2.88zM1712.12 297.98h2.88v2.88h-2.88zM1712.12 303.73h2.88v2.88h-2.88zM1712.12 309.48h2.88v2.88h-2.88zM1712.12 315.23h2.88v2.88h-2.88z" fill="#8d8f92"/><rect x="1692" y="313.1" width="23" height="5" fill="#8792a0" fill-opacity=".75"/><radialGradient id="mg7" cx=".5" cy=".5" r=".5"><stop offset="0" stop-color="#8a929a" stop-opacity=".25"/><stop offset=".8" stop-color="#9aa2aa" stop-opacity=".45"/><stop offset="1" stop-color="#c0c8d0" stop-opacity=".8"/></radialGradient><circle cx="1703.5" cy="306.6" r="11" fill="url(#mg7)"/><ellipse cx="1699.9" cy="302.0" rx="1.6" ry="2.4" fill="#fff" fill-opacity=".8"/></g><circle cx="1449.1" cy="333.00000000000006" r="7.5" fill="none" stroke="#86d4f2" stroke-width="1.5"/><rect x="1586.2" y="325.8" width="13" height="13" rx="2.6" fill="#5c5c5c"/><path d="M1589.4 335.6L1596 329.00000000000006" stroke="#2a2a2a" stroke-width="2.6" fill="none" stroke-linecap="round"/><circle cx="1610" cy="327.8" r="4" fill="#5a5a5a"/><circle cx="1610" cy="338.70000000000005" r="4" fill="#5a5a5a"/><path d="M1620 332.00000000000006L1624.6 336.6L1633.4 327.00000000000006" stroke="#52e070" stroke-width="2.3" fill="none" /><path d="M1454.6 351.20000000000005C1447.6 349.6000000000001 1442.6 351.40000000000003 1441.6 352.6000000000001C1444.6 354.40000000000003 1453.6 354.6000000000001 1456.1999999999998 356.00000000000006C1450.6 356.20000000000005 1443.6 357.40000000000003 1441.6 358.80000000000007C1444.6 360.40000000000003 1453.6 360.6000000000001 1456.1999999999998 362.00000000000006C1451.6 362.20000000000005 1447.6 363.40000000000003 1446.6 364.6000000000001C1449.6 365.40000000000003 1452.6 365.20000000000005 1455.1999999999998 364.6000000000001" stroke="#86d4f2" stroke-width="1.6" fill="none" stroke-linejoin="round" stroke-linecap="round"/><rect x="1586.2" y="350.8" width="13" height="13" rx="2.6" fill="#5c5c5c"/><path d="M1589.4 360.6L1596 354.00000000000006" stroke="#2a2a2a" stroke-width="2.6" fill="none" stroke-linecap="round"/><circle cx="1610" cy="352.8" r="4" fill="#5a5a5a"/><circle cx="1610" cy="363.70000000000005" r="4" fill="#5a5a5a"/><path d="M1620 357.00000000000006L1624.6 361.6L1633.4 352.00000000000006" stroke="#52e070" stroke-width="2.3" fill="none" /><path d="M1401.8 377.6L1407.1999999999998 374.8L1412.5 377.6L1407.1999999999998 380.40000000000003Z" fill="#ffffff" /><path d="M1401.8 378.40000000000003L1406.8 381.0V386.8L1401.8 384.2Z" fill="#d8d8d8" /><path d="M1412.5 378.40000000000003L1407.6 381.0V386.8L1412.5 384.2Z" fill="#bdbdbd" /><path d="M1395.6 382.0L1400.8 379.2L1406.0 382.0L1400.8 384.8Z" fill="#7df08e" /><path d="M1395.6 382.8L1400.3999999999999 385.40000000000003V391.40000000000003L1395.6 388.8Z" fill="#63d872" /><path d="M1406.0 382.8L1401.1999999999998 385.40000000000003V391.40000000000003L1406.0 388.8Z" fill="#3fae52" /><rect x="1586.2" y="375.8" width="13" height="13" rx="2.6" fill="#5c5c5c"/><path d="M1589.4 385.6L1596 379.00000000000006" stroke="#2a2a2a" stroke-width="2.6" fill="none" stroke-linecap="round"/><circle cx="1610" cy="377.8" r="4" fill="#5a5a5a"/><circle cx="1610" cy="388.70000000000005" r="4" fill="#5a5a5a"/><path d="M1620 382.00000000000006L1624.6 386.6L1633.4 377.00000000000006" stroke="#52e070" stroke-width="2.3" fill="none" /></svg>
<span class="t" style="left:1419.74px;top:99.5px;color:#c2c2c2;transform:scaleX(1.030);">全体</span>
<span class="t" style="left:1433.53px;top:124.5px;color:#c2c2c2;transform:scaleX(0.734);">コーティング</span>
<span class="t" style="left:1449.22px;top:149.5px;color:#c2c2c2;transform:scaleX(0.784);">スプライン</span>
<span class="t" style="left:1434.74px;top:174.5px;color:#c2c2c2;transform:scaleX(1.030);">本体</span>
<span class="t" style="left:1432.76px;top:199.5px;color:#c2c2c2;transform:scaleX(0.748);">リード</span>
<span class="t" style="left:1461.65px;top:199.5px;color:#c2c2c2;transform:scaleX(0.949);">引き出し部</span>
<span class="t" style="left:1447.66px;top:224.5px;color:#c2c2c2;transform:scaleX(0.780);">リード</span>
<span class="t" style="left:1463.69px;top:249.5px;color:#c2c2c2;transform:scaleX(1.047);">円形</span>
<span class="t" style="left:1464.22px;top:274.5px;color:#c2c2c2;transform:scaleX(0.778);">スプライン</span>
<span class="t" style="left:1449.52px;top:299.5px;color:#c2c2c2;transform:scaleX(0.970);">巻き部</span>
<span class="t" style="left:1463.69px;top:324.5px;color:#c2c2c2;transform:scaleX(1.047);">円形</span>
<span class="t" style="left:1463.09px;top:349.5px;color:#c2c2c2;transform:scaleX(0.850);">らせん</span>
<span class="t" style="left:1417.34px;top:374.5px;color:#c2c2c2;transform:scaleX(0.754);">リード</span>
<span class="t" style="left:1447.25px;top:374.5px;color:#c2c2c2;transform:scaleX(0.947);">引き出し部</span>
<span class="t" style="left:1512.41px;top:374.5px;color:#c2c2c2;transform:scaleX(0.795);">インスタンス</span>
<!-- attribute manager -->
<div style="left:1372px;top:531px;width:529px;height:380px;background:#1b1b1b;"></div>
<div style="left:1373px;top:531.5px;width:527px;height:28.3px;background:#1c1c1c;"></div>
<div style="left:1373px;top:531.5px;width:58px;height:28.5px;background:#2b2b2b;border-radius:5px 0 0 0;"></div>
<span class="t" style="left:1387.77px;top:536.8px;color:#f2f2f2;transform:scaleX(1.060);">属性</span>
<div style="left:1373px;top:559.8px;width:527px;height:28.2px;background:#2b2b2b;"></div>
<svg style="left:1381px;top:567px;" width="18" height="14" viewBox="1381 567 18 14"><rect x="1381" y="567.6" width="18" height="2.6" fill="#fff"/><rect x="1381" y="572.9" width="18" height="2.6" fill="#fff"/><rect x="1381" y="578.2" width="18" height="2.6" fill="#fff"/></svg>
<span class="t" style="left:1411.54px;top:564.5px;color:#b4b4b4;transform:scaleX(0.759);">モード</span>
<span class="t" style="left:1459px;top:564.5px;color:#b4b4b4;transform:scaleX(1.039);">編集</span>
<span class="t" style="left:1504.11px;top:564.5px;color:#b4b4b4;transform:scaleX(0.780);">ユーザーデータ</span>
<svg style="left:1700px;top:562px;" width="200" height="24" viewBox="1700 562 200 24"><path d="M1720 574.4H1705.6 M1712.4 567.4L1705.2 574.4L1712.4 581.4" stroke="#a0a0a0" stroke-width="2" fill="none" /><path d="M1730 574.4H1744.4 M1737.6 567.4L1744.8 574.4L1737.6 581.4" stroke="#4e4e4e" stroke-width="2" fill="none" /><path d="M1762.4 583V568.6 M1755.2 575.6L1762.4 568.2L1769.6 575.6" stroke="#a0a0a0" stroke-width="2" fill="none" /><circle cx="1785.4" cy="571.8" r="5.2" fill="none" stroke="#a0a0a0" stroke-width="1.8"/><path d="M1789.2 575.8L1795.6 582.6" stroke="#a0a0a0" stroke-width="2" fill="none" /><path d="M1803.8 568.6H1821.2 M1807 574.4H1818 M1810.2 580.2H1814.8" stroke="#a0a0a0" stroke-width="2.2" fill="none" /><rect x="1831.4" y="572.6" width="12.4" height="10.4" rx="1.4" fill="none" stroke="#a0a0a0" stroke-width="1.8"/><path d="M1833.8 572.6V569.4A3.6 3.6 0 0 1 1841 568.6" stroke="#a0a0a0" stroke-width="1.8" fill="none" /><circle cx="1837.6" cy="577.8" r="1.4" fill="#a0a0a0"/><circle cx="1862.4" cy="574.4" r="9.2" fill="none" stroke="#a0a0a0" stroke-width="1.8"/><circle cx="1862.4" cy="574.4" r="3.2" fill="none" stroke="#a0a0a0" stroke-width="1.6"/><path d="M1885.8 566.8H1880.6A1 1 0 0 0 1879.6 567.8V581.4A1 1 0 0 0 1880.6 582.4H1894.2A1 1 0 0 0 1895.2 581.4V576.2 M1884.4 577.6L1894.8 567.2 M1889 566.4H1895.6V573" stroke="#a0a0a0" stroke-width="1.8" fill="none" /></svg>
<div style="left:1373px;top:589px;width:527px;height:321px;background:#2b2b2b;"></div>
<div style="left:1748.6px;top:595.2px;width:142.8px;height:22.8px;background:#333333;border-radius:11.4px;"></div>
<!-- timeline -->
<div style="left:0px;top:911.6px;width:1372px;height:7.4px;background:#242424;"></div>
<div style="left:1372px;top:910.6px;width:529px;height:8.4px;background:#242424;"></div>
<div style="left:51px;top:808.6px;width:1271px;height:1.5px;background:repeating-linear-gradient(90deg,#414141 0,#414141 2px,transparent 2px,transparent 4px);"></div>
<div style="left:51px;top:813.2px;width:1271px;height:1.5px;background:repeating-linear-gradient(90deg,#414141 0,#414141 2px,transparent 2px,transparent 4px);"></div>
<svg style="left:46px;top:822px;" width="10" height="90" viewBox="46 822 10 90"><g fill="#454545"><rect x="47.0" y="823.0" width="2" height="2"/><rect x="47.0" y="827.3" width="2" height="2"/><rect x="47.0" y="831.6" width="2" height="2"/><rect x="47.0" y="835.9" width="2" height="2"/><rect x="47.0" y="840.2" width="2" height="2"/><rect x="47.0" y="844.5" width="2" height="2"/><rect x="47.0" y="848.8" width="2" height="2"/><rect x="51.4" y="823.0" width="2" height="2"/><rect x="51.4" y="827.3" width="2" height="2"/><rect x="51.4" y="831.6" width="2" height="2"/><rect x="51.4" y="835.9" width="2" height="2"/><rect x="51.4" y="840.2" width="2" height="2"/><rect x="51.4" y="844.5" width="2" height="2"/><rect x="51.4" y="848.8" width="2" height="2"/><rect x="47.0" y="857.0" width="2" height="2"/><rect x="47.0" y="861.3" width="2" height="2"/><rect x="47.0" y="865.6" width="2" height="2"/><rect x="47.0" y="869.9" width="2" height="2"/><rect x="47.0" y="874.2" width="2" height="2"/><rect x="47.0" y="878.5" width="2" height="2"/><rect x="47.0" y="882.8" width="2" height="2"/><rect x="47.0" y="887.1" width="2" height="2"/><rect x="47.0" y="891.4" width="2" height="2"/><rect x="47.0" y="895.7" width="2" height="2"/><rect x="47.0" y="900.0" width="2" height="2"/><rect x="47.0" y="904.3" width="2" height="2"/><rect x="51.4" y="857.0" width="2" height="2"/><rect x="51.4" y="861.3" width="2" height="2"/><rect x="51.4" y="865.6" width="2" height="2"/><rect x="51.4" y="869.9" width="2" height="2"/><rect x="51.4" y="874.2" width="2" height="2"/><rect x="51.4" y="878.5" width="2" height="2"/><rect x="51.4" y="882.8" width="2" height="2"/><rect x="51.4" y="887.1" width="2" height="2"/><rect x="51.4" y="891.4" width="2" height="2"/><rect x="51.4" y="895.7" width="2" height="2"/><rect x="51.4" y="900.0" width="2" height="2"/><rect x="51.4" y="904.3" width="2" height="2"/></g></svg>
<div style="left:56.4px;top:818px;width:34.6px;height:35px;background:#3e3e3e;border-radius:4px;"></div>
<svg style="left:56px;top:818px;" width="35" height="35" viewBox="56 818 35 35"><path d="M73.5 826L83 835.5L73.5 845L64 835.5Z" stroke="#bebebe" stroke-width="2.4" fill="none" /></svg>
<div style="left:295.2px;top:818px;width:244.4px;height:35px;background:#3e3e3e;border-radius:4px;"></div>
<div style="left:329.3px;top:819px;width:1px;height:33px;background:#363636;"></div>
<div style="left:364.3px;top:819px;width:1px;height:33px;background:#363636;"></div>
<div style="left:399.3px;top:819px;width:1px;height:33px;background:#363636;"></div>
<div style="left:434.1px;top:819px;width:1px;height:33px;background:#363636;"></div>
<div style="left:469.1px;top:819px;width:1px;height:33px;background:#363636;"></div>
<div style="left:504.1px;top:819px;width:1px;height:33px;background:#363636;"></div>
<svg style="left:295px;top:818px;" width="245" height="35" viewBox="295 818 245 35"><path d="M305 827.4V843.4" stroke="#bebebe" stroke-width="2" fill="none" /><path d="M320 828.4L309.4 835.4L320 842.4Z" stroke="#bebebe" stroke-width="1.8" fill="none" /><path d="M341.4 829.9L346.9 835.4L341.4 840.9L335.9 835.4Z" fill="#bebebe" /><path d="M358 828.4L349.6 835.4L358 842.4Z" stroke="#bebebe" stroke-width="1.8" fill="none" /><path d="M385.4 828.4L374.8 835.4L385.4 842.4Z" stroke="#bebebe" stroke-width="1.8" fill="none" /><path d="M389.6 827.4V843.4" stroke="#bebebe" stroke-width="2" fill="none" /><path d="M411.4 826.0L425.4 835.4L411.4 844.8Z" stroke="#bebebe" stroke-width="2" fill="none" /><path d="M445.6 827.4V843.4" stroke="#bebebe" stroke-width="2" fill="none" /><path d="M450 828.4L460.6 835.4L450 842.4Z" stroke="#bebebe" stroke-width="1.8" fill="none" /><path d="M477 828.4L485.4 835.4L477 842.4Z" stroke="#bebebe" stroke-width="1.8" fill="none" /><path d="M493.6 829.9L499.1 835.4L493.6 840.9L488.1 835.4Z" fill="#bebebe" /><path d="M514.6 828.4L525.2 835.4L514.6 842.4Z" stroke="#bebebe" stroke-width="1.8" fill="none" /><path d="M530 827.4V843.4" stroke="#bebebe" stroke-width="2" fill="none" /></svg>
<div style="left:553.6px;top:818px;width:103.4px;height:35px;background:#3e3e3e;border-radius:4px;"></div>
<div style="left:553.6px;top:818.9px;width:32.3px;height:33.2px;background:#545aa1;border-radius:4px 0px 0px 4px;"></div>
<div style="left:586.9px;top:818.9px;width:34px;height:33.2px;background:#545aa1;border-radius:0px 0px 0px 0px;"></div>
<svg style="left:553px;top:818px;" width="105" height="35" viewBox="553 818 105 35"><path d="M563.3 834.3V828.8H579.4 M575.5 824.7L579.8 828.8L575.5 832.9" stroke="#d2d2d2" stroke-width="1.7" fill="none" /><path d="M576.9 836.9V842.4H560.8 M564.8 838.3L560.4 842.4L564.8 846.5" stroke="#d2d2d2" stroke-width="1.7" fill="none" /><path d="M585.9 846.3V851.9H580.3Z" fill="#a0a0a8"/><text x="605.4" y="835.8" font-size="13.4" fill="#d2d2d2" text-anchor="middle" font-family="Liberation Sans,sans-serif">A</text><path d="M594 839.2h2.6v5.8h-2.6z M599.2 839.2h2.5v5.8h-2.5z M604.4 839.2h2.6v5.8h-2.6z M610.2 839.2h6.9v5.8h-6.9z" fill="#d2d2d2" /><path d="M621.2 846.3V851.9H615.6Z" fill="#a0a0a8"/><path d="M630.1 832.5H633.3L639.1 827.6V843.5L633.3 838.6H630.1Z" stroke="#bebebe" stroke-width="1.8" fill="none" /><path d="M642.6 831.9C645.6 833 645.6 838.4 642.6 839.5Z" fill="#bebebe" /><path d="M642.4 825.8A10.8 10.8 0 0 1 642.4 845.3" stroke="#bebebe" stroke-width="2.1" fill="none" /></svg>
<div style="left:671.4px;top:824px;width:92px;height:22.6px;background:#1c1c1c;border-radius:4px;"></div>
<span class="t" style="left:706.91px;top:826.8px;color:#e6e6e6;transform:scaleX(0.971);letter-spacing:.5px;">0 F</span>
<div style="left:778px;top:818px;width:104px;height:35px;background:#3e3e3e;border-radius:4px;"></div>
<div style="left:811.1px;top:819px;width:1px;height:33px;background:#363636;"></div>
<div style="left:846.1px;top:819px;width:1px;height:33px;background:#363636;"></div>
<svg style="left:778px;top:818px;" width="104" height="35" viewBox="778 818 104 35"><circle cx="794.6" cy="835.4" r="10.6" fill="none" stroke="#6a4541" stroke-width="1.4"/><path d="M794.6 830.4L799.6 835.4L794.6 840.4L789.6 835.4Z" fill="#5a5a5a" /><path d="M811.4 847V853H805.4Z" fill="#a0a0a0"/><circle cx="829.2" cy="835.4" r="10.6" fill="none" stroke="#ea6a5c" stroke-width="1.7"/><text x="829.2" y="841" font-size="15.4" fill="#e0e0e0" text-anchor="middle" font-family="Liberation Sans,sans-serif">A</text><circle cx="864.4" cy="835.4" r="10.6" fill="none" stroke="#bebebe" stroke-width="1.7"/><path d="M865.69 841.46 L863.11 841.46 L863.14 839.72 L861.29 838.65 L859.79 839.55 L858.5 837.32 L860.03 836.47 L860.03 834.33 L858.5 833.48 L859.79 831.25 L861.29 832.15 L863.14 831.08 L863.11 829.34 L865.69 829.34 L865.66 831.08 L867.51 832.15 L869.01 831.25 L870.3 833.48 L868.77 834.33 L868.77 836.47 L870.3 837.32 L869.01 839.55 L867.51 838.65 L865.66 839.72Z M866.4 835.4 A2 2 0 1 0 862.4 835.4 A2 2 0 1 0 866.4 835.4Z" fill="#bebebe" fill-rule="evenodd"/></svg>
<div style="left:908px;top:818px;width:173.4px;height:35px;background:#3e3e3e;border-radius:4px;"></div>
<div style="left:941.3px;top:819px;width:1px;height:33px;background:#363636;"></div>
<div style="left:975.9px;top:819px;width:1px;height:33px;background:#363636;"></div>
<div style="left:1010.9px;top:819px;width:1px;height:33px;background:#363636;"></div>
<div style="left:1047.3px;top:818.9px;width:33.6px;height:33.2px;background:#545aa1;border-radius:0px 4px 4px 0px;"></div>
<svg style="left:908px;top:818px;" width="174" height="35" viewBox="908 818 174 35"><path d="M925 829.9L930.6 835.5L925 841.1L919.4 835.5Z" fill="#bebebe" /><path d="M921.2 828.1L925 824.5L928.8 828.1 M921.2 842.9L925 846.5L928.8 842.9 M917.6 831.7L914 835.5L917.6 839.3 M932.4 831.7L936 835.5L932.4 839.3" stroke="#bebebe" stroke-width="2" fill="none" /><path d="M960 829.9L965.6 835.5L960 841.1L954.4 835.5Z" fill="#bebebe" /><path d="M959.7 824.6A11 11 0 0 0 955.4 845.5 M948.9 845.6H955.6V839.4" stroke="#bebebe" stroke-width="1.9" fill="none" /><path d="M960.15 846.4A11 11 0 0 0 964.8 825.6 M971 825.6H964.5V831.6" stroke="#bebebe" stroke-width="1.9" fill="none" /><path d="M985.5 833.5V827A1.5 1.5 0 0 1 987 825.5H1003A1.5 1.5 0 0 1 1004.5 827V843.5A1.5 1.5 0 0 1 1003 845H997" stroke="#bebebe" stroke-width="2.1" fill="none" /><path d="M990.5 834.9L996.1 840.5L990.5 846.1L984.9 840.5Z" fill="#bebebe" /><rect x="1019.8" y="827" width="20.8" height="7.6" rx="3.8" fill="#bebebe"/><rect x="1019.8" y="836.6" width="20.8" height="7.6" rx="3.8" fill="#bebebe"/><circle cx="1023.6" cy="830.8" r="1.5" fill="#3e3e3e"/><circle cx="1036.6" cy="840.4" r="1.5" fill="#3e3e3e"/><circle cx="1065.6" cy="829.2" r="3.5" fill="#cdcdcd"/><circle cx="1059" cy="841.6" r="3.9" fill="#cdcdcd"/><circle cx="1070" cy="842.4" r="3.5" fill="#cdcdcd"/><path d="M1055.4 825.8L1074.4 845.4" stroke="#545aa1" stroke-width="4.6" fill="none" /><path d="M1055.4 825.8L1074.4 845.4" stroke="#cdcdcd" stroke-width="1.9" fill="none" /></svg>
<div style="left:1285px;top:818px;width:35.2px;height:35px;background:#3e3e3e;border-radius:4px;"></div>
<svg style="left:1285px;top:818px;" width="36" height="35" viewBox="1285 818 36 35"><path d="M1294.4 827.6V844.3H1311 M1294.4 844.3L1308.4 830.3" stroke="#bebebe" stroke-width="1.9" fill="none" /><path d="M1294.4 824.2L1298 829.4H1290.8Z M1314.2 844.3L1309 847.9V840.7Z M1311 827.6L1309.8 833.4L1305.2 828.8Z" fill="#bebebe" /></svg>
<div style="left:59px;top:875px;width:1263px;height:1px;background:#444444;"></div>
<div style="left:68px;top:855px;width:12px;height:21px;background:#6f74bd;"></div>
<div style="left:74px;top:875px;width:1.2px;height:8px;background:#c0c0c0;"></div>
<span class="t" style="left:80.78px;top:856.3px;font-size:12.6px;line-height:16.6px;color:#6a6fc0;transform:scaleX(1.233);">0</span>
<div style="left:249.27px;top:879px;width:1.2px;height:4.4px;background:#b4b4b4;"></div>
<span class="t" style="left:244.16px;top:856.3px;font-size:12.6px;line-height:16.6px;color:#a8a8a8;transform:scaleX(1.309);">1</span>
<div style="left:424.54px;top:879px;width:1.2px;height:4.4px;background:#b4b4b4;"></div>
<span class="t" style="left:420.14px;top:856.3px;font-size:12.6px;line-height:16.6px;color:#a8a8a8;transform:scaleX(1.200);">2</span>
<div style="left:599.81px;top:879px;width:1.2px;height:4.4px;background:#b4b4b4;"></div>
<span class="t" style="left:595.41px;top:856.3px;font-size:12.6px;line-height:16.6px;color:#a8a8a8;transform:scaleX(1.200);">3</span>
<div style="left:775.08px;top:879px;width:1.2px;height:4.4px;background:#b4b4b4;"></div>
<span class="t" style="left:771px;top:856.3px;font-size:12.6px;line-height:16.6px;color:#a8a8a8;transform:scaleX(1.108);">4</span>
<div style="left:950.35px;top:879px;width:1.2px;height:4.4px;background:#b4b4b4;"></div>
<span class="t" style="left:945.95px;top:856.3px;font-size:12.6px;line-height:16.6px;color:#a8a8a8;transform:scaleX(1.200);">5</span>
<div style="left:1125.62px;top:879px;width:1.2px;height:4.4px;background:#b4b4b4;"></div>
<span class="t" style="left:1121.22px;top:856.3px;font-size:12.6px;line-height:16.6px;color:#a8a8a8;transform:scaleX(1.200);">6</span>
<div style="left:1300.89px;top:879px;width:1.2px;height:4.4px;background:#b4b4b4;"></div>
<span class="t" style="left:1296.49px;top:856.3px;font-size:12.6px;line-height:16.6px;color:#a8a8a8;transform:scaleX(1.200);">7</span>
<div style="left:57.4px;top:887px;width:93px;height:22px;background:#1a1a1a;border-radius:5px;"></div>
<span class="t" style="left:93.51px;top:889.7px;color:#e6e6e6;transform:scaleX(0.981);letter-spacing:.5px;">0 F</span>
<div style="left:160.2px;top:886.5px;width:1062.2px;height:21.6px;background:#3a3a3a;border-radius:4px;"></div>
<svg style="left:166px;top:889px;" width="7" height="17" viewBox="166 889 7 17"><path d="M166.8 889.6V905.4 M169.2 889.6V905.4 M171.6 889.6V905.4" stroke="#555" stroke-width="1" fill="none" /></svg>
<svg style="left:1211px;top:889px;" width="7" height="17" viewBox="1211 889 7 17"><path d="M1211.6 889.6V905.4 M1214 889.6V905.4 M1216.4 889.6V905.4" stroke="#555" stroke-width="1" fill="none" /></svg>
<span class="t" style="left:178.31px;top:888.9px;color:#e6e6e6;transform:scaleX(0.981);letter-spacing:.5px;">0 F</span>
<span class="t" style="left:1182.53px;top:888.9px;color:#e6e6e6;transform:scaleX(0.939);letter-spacing:.5px;">7 F</span>
<div style="left:1231.4px;top:887px;width:92.4px;height:22px;background:#1a1a1a;border-radius:5px;"></div>
<span class="t" style="left:1267.53px;top:889.7px;color:#e6e6e6;transform:scaleX(0.949);letter-spacing:.5px;">7 F</span>
</body></html>
